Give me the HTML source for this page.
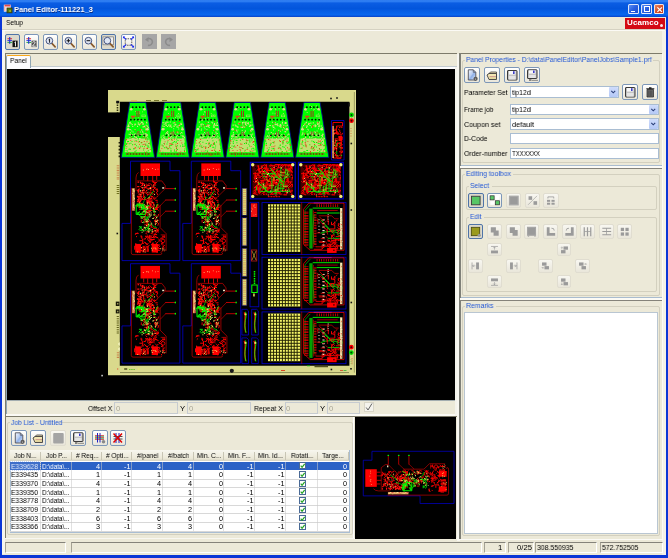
<!DOCTYPE html>
<html><head><meta charset="utf-8"><title>Panel Editor</title>
<style>
html,body{margin:0;padding:0;}
body{width:668px;height:558px;overflow:hidden;background:#ece9d8;font-family:"Liberation Sans",sans-serif;font-size:7.6px;color:#000;position:relative;}
.a{position:absolute;}
.t{position:absolute;white-space:nowrap;line-height:10px;will-change:transform;}
.bl{color:#2257d6;}
.btn{position:absolute;width:14px;height:14px;border:1px solid #7d97b8;border-radius:2px;background:linear-gradient(#ffffff,#e9e6da);}
.btn svg{position:absolute;left:0;top:0;}
.btn.dis{border-color:#e0ddd0;background:linear-gradient(#f8f7f1,#e9e6da);}
.btn.sel{background:#dcd9cc;border-color:#4f74a8;}
.grp{position:absolute;border:1px solid #d3d0bf;border-radius:2px;box-sizing:border-box;}
.inp{position:absolute;background:#fff;border:1px solid #a9bdd2;box-sizing:border-box;}
.inp.dis{background:#ece9d8;border-color:#c6cbd0;}
.cell{position:absolute;height:9px;line-height:9px;white-space:nowrap;overflow:hidden;font-size:7.4px;}
svg{display:block;}
</style></head><body>

<div class="a" style="left:0;top:0;width:668px;height:558px;background:#0a36d6;"></div>
<div class="a" style="left:0;top:0;width:668px;height:16.500px;background:linear-gradient(#2b79ee 0%,#3382f5 7%,#0b5de3 18%,#0355dc 50%,#0560e8 72%,#0866ee 86%,#0658e0 93%,#0a3fc4 100%);"></div>
<div class="a" style="left:2.100px;top:16.500px;width:663.600px;height:538.700px;background:#ece9d8;"></div>
<svg class="a" style="left:3px;top:4px" width="10" height="10" viewBox="0 0 10 10"><rect x="0.800" y="0.700" width="7" height="7" fill="#f6f2f2"/><rect x="1.500" y="0.700" width="6" height="1.800" fill="#e84a4a"/><rect x="1.200" y="2.500" width="1.200" height="4.500" fill="#f0a0a0"/><rect x="4" y="4" width="5" height="4.800" fill="#4e7a12" stroke="#3a3208" stroke-width="0.800"/><rect x="6.200" y="6.500" width="1.800" height="1" fill="#e8d820"/></svg>
<div class="t" style="top:5px;font-size:8.1px;transform:scaleX(0.928);transform-origin:left center;color:#fff;font-weight:bold;left:13.8px;text-shadow:0.5px 0.5px 0 #0a2a80;">Panel Editor-111221_3</div>
<div class="a" style="left:628.3px;top:3.5px;width:10.5px;height:10.5px;box-sizing:border-box;border:0.6px solid rgba(255,255,255,0.85);border-radius:1.5px;background:linear-gradient(135deg,#5a8ff4,#2a5fe0 50%,#1d4fd0);"><div class="a" style="left:2px;top:6.3px;width:3.5px;height:1.5px;background:#fff"></div></div>
<div class="a" style="left:641px;top:3.5px;width:10.5px;height:10.5px;box-sizing:border-box;border:0.6px solid rgba(255,255,255,0.85);border-radius:1.5px;background:linear-gradient(135deg,#5a8ff4,#2a5fe0 50%,#1d4fd0);"><div class="a" style="left:1.8px;top:1.8px;width:4.4px;height:3.6px;border:0.8px solid #fff;border-top-width:1.6px;"></div></div>
<div class="a" style="left:653.7px;top:3.5px;width:10.5px;height:10.5px;box-sizing:border-box;border:0.6px solid rgba(255,255,255,0.85);border-radius:1.5px;background:linear-gradient(135deg,#ee8a62,#d5502a 50%,#c23a14);"><svg width="9.300" height="9.300" viewBox="0 0 9.300 9.300"><path d="M2.400 2.400L6.900 6.900M6.900 2.400L2.400 6.900" stroke="#fff" stroke-width="1.300"/></svg></div>
<div class="t" style="top:18px;font-size:7.7px;transform:scaleX(0.850);transform-origin:left center;left:5.7px;">Setup</div>
<div class="a" style="left:625px;top:17.5px;width:40px;height:11px;background:#d40a12;"></div>
<div class="t" style="left:627px;top:17.5px;color:#fff;font-weight:bold;font-size:8px;letter-spacing:0.1px;">Ucamco</div>
<div class="a" style="left:659.5px;top:23.5px;width:3px;height:3px;border-radius:2px;background:#fff;opacity:.9"></div>
<div class="a" style="left:2px;top:29px;width:663px;height:1px;background:#d5d2c2;"></div>
<div class="a" style="left:2px;top:30px;width:663px;height:1px;background:#fbfaf5;"></div>
<div class="btn sel" style="left:5.2px;top:33.7px;width:13px;height:14px;"><svg width="13" height="14" viewBox="0 0 14 14"><path d="M1.5 3.5h5" stroke="#e02020" stroke-width="1"/><path d="M1.5 5.5h5" stroke="#2030e0" stroke-width="1"/><path d="M1.5 7.5h5" stroke="#20b040" stroke-width="1"/><path d="M4 1.5v7.5" stroke="#2030d0" stroke-width="1.2"/><rect x="7" y="5.5" width="5.5" height="7" fill="#111"/><path d="M9.2 7.5l1-0.8v5" stroke="#fff" stroke-width="1" fill="none"/></svg></div>
<div class="btn " style="left:24px;top:33.7px;width:13px;height:14px;"><svg width="13" height="14" viewBox="0 0 14 14"><path d="M1.5 3.5h5" stroke="#e02020" stroke-width="1"/><path d="M1.5 5.5h5" stroke="#2030e0" stroke-width="1"/><path d="M1.5 7.5h5" stroke="#20b040" stroke-width="1"/><path d="M4 1.5v7.5" stroke="#2030d0" stroke-width="1.2"/><rect x="7" y="5.5" width="5.5" height="7" fill="#555"/><path d="M8 7.5c1-1.5 3.5-1 2.6.8L8 11.5h3.6" stroke="#fff" stroke-width="0.9" fill="none"/></svg></div>
<div class="btn " style="left:42.8px;top:33.7px;width:13px;height:14px;"><svg width="13" height="14" viewBox="0 0 14 14"><path d="M8 8L12 12.2" stroke="#8a5a2a" stroke-width="1.8" stroke-linecap="round"/><circle cx="5.8" cy="5.6" r="3.6" fill="#dfe6f4" stroke="#3a4a78" stroke-width="1"/><path d="M5 4.6l1-.8v4" stroke="#111" stroke-width="1" fill="none"/></svg></div>
<div class="btn " style="left:62.2px;top:33.7px;width:13px;height:14px;"><svg width="13" height="14" viewBox="0 0 14 14"><path d="M8 8L12 12.2" stroke="#8a5a2a" stroke-width="1.8" stroke-linecap="round"/><circle cx="5.8" cy="5.6" r="3.6" fill="#dfe6f4" stroke="#3a4a78" stroke-width="1"/><path d="M3.8 5.6h4M5.8 3.6v4" stroke="#111" stroke-width="1.1"/></svg></div>
<div class="btn " style="left:81.8px;top:33.7px;width:13px;height:14px;"><svg width="13" height="14" viewBox="0 0 14 14"><path d="M8 8L12 12.2" stroke="#8a5a2a" stroke-width="1.8" stroke-linecap="round"/><circle cx="5.8" cy="5.6" r="3.6" fill="#dfe6f4" stroke="#3a4a78" stroke-width="1"/><path d="M3.8 5.6h4" stroke="#111" stroke-width="1.1"/></svg></div>
<div class="btn sel" style="left:101.3px;top:33.7px;width:13px;height:14px;"><svg width="13" height="14" viewBox="0 0 14 14"><rect x="1" y="1.5" width="11.5" height="8.5" fill="#f2f2f2" stroke="#777" stroke-width="0.8"/><path d="M8 8L12 12.2" stroke="#8a5a2a" stroke-width="1.8" stroke-linecap="round"/><circle cx="5.8" cy="5.6" r="3.6" fill="#dfe6f4" stroke="#3a4a78" stroke-width="1"/></svg></div>
<div class="btn " style="left:121.2px;top:33.7px;width:13px;height:14px;"><svg width="13" height="14" viewBox="0 0 14 14"><rect x="3.5" y="3.5" width="7" height="7" fill="none" stroke="#222" stroke-width="0.8" stroke-dasharray="1.5 1"/><path d="M1.5 1.5L4.5 4.5M12.5 1.5L9.5 4.5M1.5 12.5L4.5 9.5M12.5 12.5L9.5 9.5" stroke="#1828f0" stroke-width="1.1"/><path d="M1 1h2.5L1 3.5zM13 1h-2.5L13 3.5zM1 13h2.5L1 10.500zM13 13h-2.5L13 10.5z" fill="#1828f0"/></svg></div>
<div class="a" style="left:141.6px;top:34.2px;width:15px;height:15px;background:#a6a6a6;"><svg width="15" height="15" viewBox="0 0 15 15"><path d="M5 5.2A3.4 3.4 0 1 1 6 11.2" fill="none" stroke="#8c8c8c" stroke-width="1.6"/><path d="M3 5.8L6.5 3v5z" fill="#8c8c8c"/></svg></div>
<div class="a" style="left:161px;top:34.2px;width:15px;height:15px;background:#a6a6a6;"><svg width="15" height="15" viewBox="0 0 15 15"><path d="M10 5.2A3.4 3.4 0 1 0 9 11.2" fill="none" stroke="#8c8c8c" stroke-width="1.6"/><path d="M12 5.8L8.500 3v5z" fill="#8c8c8c"/></svg></div>
<div class="a" style="left:4.800px;top:52.500px;width:452px;height:1.200px;background:#7d7b6b;"></div>
<div class="a" style="left:459.500px;top:52.500px;width:202.500px;height:1.200px;background:#7d7b6b;"></div>
<div class="a" style="left:2px;top:31px;width:2.800px;height:523px;background:#f6f5ee;"></div>
<div class="a" style="left:4.800px;top:52.500px;width:1.500px;height:486px;background:#7d7b6b;"></div>
<div class="a" style="left:4.800px;top:538px;width:452.500px;height:1.200px;background:#f8f7f1;"></div>
<div class="a" style="left:6px;top:66px;width:451px;height:1px;background:#c3cbd0;"></div>
<div class="a" style="left:6px;top:67px;width:451px;height:2px;background:#fcfcfe;"></div>
<div class="a" style="left:6px;top:67px;width:1px;height:348px;background:#91a7b4;"></div>
<div class="a" style="left:6.4px;top:54.6px;width:24.4px;height:13px;background:#fcfcfe;border:1px solid #91a7b4;border-bottom:none;border-top:1.5px solid #f8a81c;border-radius:2px 2px 0 0;box-sizing:border-box;"></div>
<div class="t" style="top:56px;font-size:7.7px;transform:scaleX(0.858);transform-origin:left center;left:9.9px;">Panel</div>
<svg class="a" style="left:7px;top:69px;" width="448" height="331" viewBox="7 69 448 331"><rect x="7" y="69" width="449" height="331" fill="#000"/><defs><g id="bb"><path d="M8.8 0.3H48.3V9.8H58.2V99.7H0.3V62.5H8.800z" fill="none" stroke="#0000cc" stroke-width="0.8"/><path d="M9.600 27V92q0 1.700 1.700 1.700H38.500q1.700 0 1.700-1.700" fill="none" stroke="#d00000" stroke-width="0.7"/><path d="M38.400 44V66.700L44.400 72.700V90" fill="none" stroke="#d00000" stroke-width="0.7"/><path d="M14.300 30V17q0-4 2.500-5.500M15.300 20H40.100L43.500 24.500V27.700" fill="none" stroke="#d00000" stroke-width="0.7"/><rect x="18.8" y="2.5" width="19.5" height="12.6" fill="#ff0000"/><path d="M24.6 8.1h0.8v0.8h-0.8zM26.5 8.2h0.8v0.8h-0.8zM30.4 7.1h0.8v0.8h-0.8zM21.2 8.7h0.8v0.8h-0.8zM24.9 7.5h0.8v0.8h-0.8zM35.9 7.9h0.8v0.8h-0.8zM33.5 8.0h0.8v0.8h-0.8z" fill="#ffd080"/><path d="M22 15v4M26 15v5M31 15v5M35 15v4" stroke="#ff0000" stroke-width="0.8"/><rect x="10.5" y="27.300" width="2.5" height="22.500" fill="#e0a060"/><path d="M11.7 30.7h0.9v0.9h-0.9zM11.6 46.2h0.9v0.9h-0.9zM11.4 43.4h0.9v0.9h-0.9zM11.7 28.9h0.9v0.9h-0.9zM11.9 40.2h0.9v0.9h-0.9zM11.0 28.2h0.9v0.9h-0.9zM12.1 37.7h0.9v0.9h-0.9zM11.8 46.4h0.9v0.9h-0.9zM11.8 47.3h0.9v0.9h-0.9zM11.2 44.7h0.9v0.9h-0.9zM11.3 47.6h0.9v0.9h-0.9zM12.1 29.6h0.9v0.9h-0.9zM10.7 32.2h0.9v0.9h-0.9zM12.2 36.9h0.9v0.9h-0.9zM11.6 34.0h0.9v0.9h-0.9zM11.4 35.8h0.9v0.9h-0.9z" fill="#ffee90"/><path d="M11.1 40.1h0.9v0.9h-0.9zM11.6 46.9h0.9v0.9h-0.9zM11.7 47.5h0.9v0.9h-0.9zM12.0 48.8h0.9v0.9h-0.9zM11.7 31.0h0.9v0.9h-0.9zM12.0 48.2h0.9v0.9h-0.9zM12.1 39.7h0.9v0.9h-0.9zM11.8 32.0h0.9v0.9h-0.9z" fill="#e04040"/><path d="M43.5 27.7L53.3 27.7" stroke="#b80000" stroke-width="1.0"/><rect x="53" y="26.9" width="1.3" height="1.600" fill="#00ff00"/><path d="M43.5 39.1L53.3 39.1" stroke="#b80000" stroke-width="1.0"/><rect x="53" y="38.300000000000004" width="1.3" height="1.600" fill="#00ff00"/><path d="M43.5 50.3L53.3 50.3" stroke="#b80000" stroke-width="1.0"/><rect x="53" y="49.5" width="1.3" height="1.600" fill="#00ff00"/><path d="M43.500 27.700L34 37M44 39.100L35 48.500M44 50.300L38.500 56" stroke="#d00000" stroke-width="0.6" fill="none"/><rect x="40.500" y="26.300" width="2" height="1.500" fill="#f0e0c0"/><path d="M32.5 37.2L34.6 37.2M25.1 39.2L27.1 41.1M31.8 32.3L33.0 33.5M24.0 32.5L25.6 32.5M22.9 37.6L25.0 39.7M25.6 50.0L27.8 50.0M17.3 36.1L20.3 33.0M21.1 27.9L23.6 30.3M21.6 48.8L24.5 45.8M22.9 46.1L25.4 46.1M28.0 48.2L30.0 46.2M28.3 41.5L31.3 38.5M35.5 35.6L36.0 35.6M31.6 49.6L33.1 48.1M27.9 39.0L28.9 39.9M24.8 40.4L26.4 42.0M30.5 20.7L31.9 20.7M35.2 27.5L36.0 29.4M18.7 25.6L21.3 28.1M21.3 31.3L25.1 31.3M35.4 40.5L35.4 42.1M28.7 28.1L30.3 26.5M28.6 22.9L30.9 25.1M29.2 26.7L29.2 30.6M16.7 42.3L18.0 40.9M20.7 43.6L20.7 44.9M21.6 45.1L23.8 47.3M22.1 44.8L23.2 45.9M27.4 32.6L29.4 34.7M24.8 39.0L26.3 37.5M15.7 32.4L17.0 31.1M34.8 46.4L36.0 43.3M26.7 49.6L30.3 49.6M30.7 45.1L33.0 47.5M26.4 46.7L29.3 49.5M17.5 27.3L17.5 28.7M33.8 47.0L36.0 47.0M25.1 23.6L25.1 26.5M28.9 35.7L31.5 35.7M22.2 27.6L25.0 24.7M32.0 21.8L34.0 21.8M26.2 44.5L27.5 45.7M34.4 44.2L36.0 44.2M25.2 37.1L27.0 38.9M20.2 38.5L23.1 38.5M24.9 43.3L26.1 43.3M31.3 21.4L32.2 20.4M35.5 45.6L36.0 44.6M21.6 29.4L23.3 27.8M27.3 30.8L28.6 32.1M24.0 23.8L24.9 23.0M31.7 37.0L32.6 36.1M27.7 43.5L30.1 43.5M28.1 32.9L29.8 31.2M31.0 29.4L34.0 26.4M24.7 27.4L27.6 27.4M31.9 26.7L33.5 26.7M34.7 31.2L36.0 34.1M17.6 40.7L20.6 37.7M29.0 42.0L32.1 42.0M32.0 41.5L32.0 44.3M31.3 21.3L32.8 21.3M28.8 31.3L31.6 34.0M32.7 23.6L35.5 20.8M32.6 48.6L35.7 48.6M15.8 43.0L15.8 45.9M17.2 42.5L21.5 42.5M26.6 46.1L28.3 46.1M20.1 25.4L21.5 24.0M20.3 38.0L23.3 35.0M35.3 31.3L36.0 29.9M32.7 49.0L34.5 47.2M18.3 32.0L18.3 36.2M17.0 42.4L20.0 39.5M27.3 45.7L27.3 47.4M18.1 35.5L21.1 38.5M29.1 45.7L31.3 47.9M33.7 29.2L35.1 27.8M19.2 37.1L20.6 35.7M31.3 24.3L34.4 21.2M29.7 26.2L32.8 26.2M25.1 41.6L27.9 38.8M31.4 46.5L31.4 47.8M33.7 39.4L36.0 39.4M35.1 45.6L35.1 47.6M31.3 24.1L34.5 24.1M33.9 27.7L36.0 30.5M18.8 22.7L22.7 22.7M16.9 45.0L18.5 46.5M24.5 42.0L26.8 42.0M22.0 33.1L22.0 35.9M28.5 42.3L28.5 45.1M26.4 23.6L27.9 22.1M17.4 46.6L21.6 46.6M26.1 41.0L28.5 43.4M30.9 28.9L33.3 31.3M17.3 48.3L19.6 48.3M29.0 35.3L30.0 36.2M29.2 37.0L29.2 38.8M18.8 46.7L22.1 46.7M17.3 36.8L20.2 33.8M26.7 39.4L28.6 41.3M31.4 41.2L31.4 42.7M30.8 36.3L33.4 38.8M17.1 28.1L17.1 29.5M15.9 35.1L17.3 36.6M33.4 48.4L36.0 48.4M22.4 45.4L23.5 46.5M27.4 40.4L30.5 40.4M18.9 25.7L20.7 23.9" stroke="#ff0000" stroke-width="1.0" fill="none"/><path d="M27.2 39.7L27.2 41.9M27.9 41.0L27.9 43.0M23.5 26.1L24.6 27.1M15.5 41.1L17.4 39.1M19.7 43.7L20.9 42.5M29.7 38.2L30.0 37.0M15.5 25.8L17.7 25.8M26.6 37.5L27.9 36.2M18.0 40.6L19.0 39.6M16.7 28.1L16.7 30.4M17.0 40.8L19.3 40.8M15.4 36.5L16.8 35.1M23.1 44.2L24.2 45.4M25.4 24.4L28.1 24.4M25.7 39.5L25.7 41.2M29.0 42.5L29.0 44.4M22.3 23.7L23.4 23.7M27.7 38.6L28.9 37.4M25.5 34.4L26.8 33.1M19.6 32.6L21.3 30.9M21.6 32.4L22.3 33.1M20.5 30.3L21.9 28.8M18.4 21.1L19.4 22.1M17.2 32.5L17.2 33.9M15.3 35.6L17.3 35.6M17.1 36.2L17.1 38.1M15.9 21.6L17.2 21.0M15.5 38.8L17.0 38.8M20.9 21.7L20.9 24.6M18.6 30.7L19.6 31.7M24.3 29.7L25.6 29.7M27.1 28.3L29.2 26.2M26.8 45.0L28.2 46.0M15.5 29.4L17.5 31.5M16.4 38.1L19.3 38.1M16.6 38.0L17.6 38.0M22.2 25.7L23.6 27.1M18.0 45.3L19.4 44.0M28.8 44.5L29.5 45.3M26.3 36.8L27.5 38.0" stroke="#ff1010" stroke-width="1.3" fill="none"/><path d="M20.7 55.6L22.7 57.6M27.7 65.8L29.5 64.0M33.7 59.5L36.7 62.5M33.0 56.3L34.9 54.4M23.9 67.0L25.9 65.0M36.0 45.2L37.0 45.2M33.5 46.6L36.9 46.6M23.4 60.8L27.2 60.8M34.6 68.4L36.4 70.3M36.9 44.0L37.0 44.0M23.8 52.7L23.8 55.4M21.8 45.4L21.8 47.1M28.7 44.3L28.7 46.3M21.4 59.7L23.2 61.6M32.8 59.0L32.8 60.8M29.4 45.2L33.3 45.2M34.2 46.8L37.0 49.9M18.7 57.0L20.7 57.0M29.8 65.3L32.7 68.2M25.1 62.5L27.7 65.1M33.7 60.6L33.7 64.5M19.3 44.2L21.5 44.2M23.8 49.4L26.4 52.0M25.5 62.2L25.5 65.4M22.0 67.5L22.0 68.9M25.6 46.4L25.6 48.3M32.0 49.8L33.3 48.4M35.6 59.0L35.6 61.6M35.1 70.6L37.0 68.6M26.4 60.5L27.7 60.5M20.7 46.7L23.2 49.2M27.1 45.7L27.1 48.5M31.9 51.7L33.7 53.6M26.4 49.5L26.4 53.3M19.1 52.4L21.6 52.4M21.1 57.6L23.8 60.4M36.5 71.4L37.0 72.0M35.9 56.1L37.0 53.1M27.5 59.2L29.2 60.8M22.7 57.0L25.6 59.9M32.0 70.0L34.9 70.0M19.6 58.9L19.6 61.8M36.0 44.1L37.0 44.0M24.1 71.0L26.5 71.0M26.8 50.7L28.3 52.2M33.7 60.9L36.4 58.2M23.2 50.9L25.9 48.2M31.5 53.5L32.8 53.5M29.5 62.9L29.5 67.1M36.1 64.8L37.0 62.0M27.2 67.3L29.3 69.4M17.3 45.3L20.1 45.3M34.9 69.4L36.9 67.5M24.4 61.7L26.6 61.7M30.7 71.8L32.8 69.7M32.5 56.4L34.0 57.9M26.1 70.9L27.2 72.0M19.8 45.1L19.8 47.9M33.6 70.1L36.8 70.1M23.3 60.7L23.3 62.3M22.6 63.9L26.8 63.9M25.7 46.1L26.6 45.2M34.9 70.9L34.9 72.0M23.2 53.7L25.6 51.3M23.3 51.6L26.4 54.6M23.3 55.0L23.3 57.1M25.3 55.6L28.3 52.7M21.6 49.6L23.1 49.6M31.9 67.5L35.1 67.5M35.8 71.3L37.0 68.8" stroke="#ff0000" stroke-width="0.9" fill="none"/><path d="M21.4 55.5L24.1 55.5M19.5 55.6L19.5 57.9M34.1 47.0L36.0 42.8M28.9 46.0L28.9 47.7M22.2 60.2L22.2 62.3M17.0 68.9L19.7 66.2M31.6 54.1L33.9 54.1M21.6 45.7L21.6 47.8M23.7 68.3L23.7 70.0M16.1 52.4L17.6 50.9M20.9 51.9L25.0 47.9M18.1 65.7L20.6 68.3M26.6 65.9L29.1 63.5M25.3 57.1L27.7 54.6M32.7 47.6L32.7 51.8M22.0 66.0L26.1 70.0M21.3 47.7L23.1 47.7M24.2 66.4L26.2 66.4M19.2 45.4L21.5 47.8M26.5 63.4L27.8 62.1M22.5 58.5L24.3 56.8M26.1 52.5L28.2 54.5M30.1 63.6L33.4 66.9M33.2 65.4L35.2 67.3M21.4 45.4L24.0 48.1M30.6 49.0L33.0 51.4M25.1 55.4L25.1 59.3M35.7 56.8L36.0 56.8M17.4 53.9L21.1 57.6M17.2 65.9L20.4 65.9M23.3 48.0L27.3 48.0M24.6 66.3L27.9 69.6M16.2 52.4L18.5 50.2M23.5 60.2L27.3 56.4M18.9 48.2L22.1 48.2M18.8 44.3L20.9 46.3M19.9 42.8L23.3 46.2M26.7 62.6L26.7 67.9M24.8 61.1L26.3 59.7M20.5 45.9L20.5 48.8M18.3 46.9L22.2 43.0M16.6 51.8L16.6 53.4M25.5 45.9L27.1 44.2M27.7 68.6L29.7 70.0M17.9 69.4L22.6 69.4" stroke="#00ff00" stroke-width="0.8" fill="none"/><path d="M20.1 68.1h1.0v1.0h-1.0zM31.7 50.3h1.0v1.0h-1.0zM33.4 50.4h1.0v1.0h-1.0zM34.5 60.2h1.0v1.0h-1.0zM20.6 61.1h1.0v1.0h-1.0zM30.0 68.2h1.0v1.0h-1.0zM22.8 50.3h1.0v1.0h-1.0zM30.0 70.7h1.0v1.0h-1.0zM19.9 56.6h1.0v1.0h-1.0zM34.3 56.3h1.0v1.0h-1.0zM23.1 66.5h1.0v1.0h-1.0zM22.1 66.3h1.0v1.0h-1.0zM33.0 69.4h1.0v1.0h-1.0zM25.7 51.0h1.0v1.0h-1.0zM26.8 70.7h1.0v1.0h-1.0zM22.9 58.3h1.0v1.0h-1.0zM24.8 58.8h1.0v1.0h-1.0zM28.9 51.7h1.0v1.0h-1.0zM27.8 50.1h1.0v1.0h-1.0zM33.6 58.7h1.0v1.0h-1.0zM31.3 56.8h1.0v1.0h-1.0zM26.6 63.1h1.0v1.0h-1.0zM33.6 60.1h1.0v1.0h-1.0zM27.4 67.3h1.0v1.0h-1.0zM22.1 43.3h1.0v1.0h-1.0zM26.8 69.7h1.0v1.0h-1.0zM27.5 67.0h1.0v1.0h-1.0zM24.4 64.2h1.0v1.0h-1.0zM24.6 47.9h1.0v1.0h-1.0zM34.0 61.8h1.0v1.0h-1.0zM31.4 47.6h1.0v1.0h-1.0zM25.2 47.2h1.0v1.0h-1.0zM23.8 51.1h1.0v1.0h-1.0zM19.9 70.9h1.0v1.0h-1.0zM31.4 46.6h1.0v1.0h-1.0zM24.2 45.5h1.0v1.0h-1.0zM21.9 55.5h1.0v1.0h-1.0zM22.6 65.9h1.0v1.0h-1.0zM25.2 47.4h1.0v1.0h-1.0zM30.6 57.0h1.0v1.0h-1.0zM29.2 53.6h1.0v1.0h-1.0zM22.0 49.7h1.0v1.0h-1.0zM25.4 42.5h1.0v1.0h-1.0zM28.1 54.6h1.0v1.0h-1.0zM19.3 45.6h1.0v1.0h-1.0zM27.8 53.4h1.0v1.0h-1.0zM27.4 52.5h1.0v1.0h-1.0zM27.5 55.5h1.0v1.0h-1.0zM25.9 59.8h1.0v1.0h-1.0zM31.9 43.7h1.0v1.0h-1.0zM26.1 67.7h1.0v1.0h-1.0zM21.5 50.3h1.0v1.0h-1.0zM24.9 44.7h1.0v1.0h-1.0zM24.1 60.1h1.0v1.0h-1.0zM21.6 69.5h1.0v1.0h-1.0zM25.4 41.3h1.0v1.0h-1.0zM24.9 60.3h1.0v1.0h-1.0zM29.6 62.5h1.0v1.0h-1.0zM35.6 59.0h1.0v1.0h-1.0zM28.9 61.7h1.0v1.0h-1.0zM23.9 50.4h1.0v1.0h-1.0zM26.0 69.6h1.0v1.0h-1.0zM30.1 69.6h1.0v1.0h-1.0zM26.2 57.9h1.0v1.0h-1.0zM32.0 53.5h1.0v1.0h-1.0zM25.3 45.8h1.0v1.0h-1.0zM24.0 46.1h1.0v1.0h-1.0zM33.2 62.8h1.0v1.0h-1.0zM24.5 45.2h1.0v1.0h-1.0zM34.6 55.5h1.0v1.0h-1.0z" fill="#f0e060"/><path d="M25.7 31.3h0.9v0.9h-0.9zM32.3 33.1h0.9v0.9h-0.9zM22.6 36.5h0.9v0.9h-0.9zM26.9 36.0h0.9v0.9h-0.9zM19.0 35.3h0.9v0.9h-0.9zM18.1 33.0h0.9v0.9h-0.9zM18.1 29.7h0.9v0.9h-0.9zM26.0 28.3h0.9v0.9h-0.9zM20.9 31.6h0.9v0.9h-0.9zM28.3 26.6h0.9v0.9h-0.9zM20.7 26.2h0.9v0.9h-0.9zM18.0 29.4h0.9v0.9h-0.9zM18.7 29.4h0.9v0.9h-0.9zM28.3 27.3h0.9v0.9h-0.9zM30.0 40.9h0.9v0.9h-0.9zM28.0 26.9h0.9v0.9h-0.9zM20.7 29.0h0.9v0.9h-0.9zM22.2 24.1h0.9v0.9h-0.9zM31.6 24.7h0.9v0.9h-0.9zM17.5 41.7h0.9v0.9h-0.9z" fill="#ffd860"/><path d="M14.500 44h7v3h2v6.500h-9z" fill="none" stroke="#00ff00" stroke-width="1"/><path d="M32.0 30.0L26.0 38.0" stroke="#00ff00" stroke-width="0.7"/><path d="M13.0 45.0L28.0 45.0" stroke="#00ff00" stroke-width="0.6"/><path d="M24.0 36.0L20.0 46.0" stroke="#00ff00" stroke-width="0.6"/><path d="M17.3 43.6L17.3 47.2M15.7 51.3L15.7 53.5M17.7 54.2L20.1 51.8M23.8 48.0L24.0 49.6M19.9 47.4L19.9 49.0M18.3 42.0L18.3 45.5M19.0 55.3L21.6 56.0M16.6 50.8L18.6 52.8M16.0 44.2L20.0 44.2M18.8 52.3L20.2 53.7M20.7 50.5L20.7 52.4M14.9 43.1L18.1 43.1" stroke="#00ff00" stroke-width="0.9" fill="none"/><path d="M13.2 73.7L15.9 72.0M34.2 83.1L36.7 80.6M20.9 86.0L22.0 87.1M33.5 80.3L34.5 81.4M28.5 78.6L33.0 78.6M14.3 76.2L15.4 75.2M41.1 86.4L43.0 84.1M26.6 88.0L26.6 90.5M17.7 79.8L20.4 79.8M29.4 83.9L31.7 83.9M25.2 83.8L26.7 82.2M30.1 77.3L32.7 74.7M32.9 86.7L35.0 84.6M32.1 88.0L33.5 86.6M28.0 74.0L28.0 78.3M26.2 74.5L26.2 79.0M19.8 82.5L22.2 82.5M28.0 81.6L29.6 80.0M13.6 72.5L17.0 72.5M34.3 89.4L38.5 89.4M23.3 77.9L26.1 75.2M22.0 78.1L23.9 78.1M25.2 85.0L25.2 86.8M20.1 75.2L20.1 77.8M31.9 73.7L35.4 73.7M27.9 79.2L30.9 79.2M25.7 86.2L27.9 84.0M26.0 78.9L29.0 81.9M22.2 86.8L23.8 85.2M35.4 76.1L36.7 77.4M35.3 91.1L35.3 92.0M34.6 84.0L38.1 84.0M31.3 76.8L33.4 76.8M32.6 90.3L34.6 88.3M39.5 83.3L41.3 81.5M37.6 79.3L40.3 76.5M23.9 86.5L23.9 88.8M17.1 89.6L20.9 89.6M32.3 86.6L33.5 85.3M27.3 79.6L29.5 77.5M31.4 81.5L31.4 83.2M40.5 75.9L43.0 75.9M42.4 74.8L43.0 74.8M16.7 83.9L19.7 86.9M29.5 74.6L29.5 77.3M17.7 85.8L20.1 83.4M22.5 80.9L25.5 83.9M29.5 83.8L31.3 82.0M19.4 74.4L19.4 76.5M39.6 76.9L41.1 78.4M19.9 90.0L21.6 91.8M36.2 88.7L37.7 87.2M13.0 84.9L13.0 88.8M41.0 87.1L43.0 87.1M36.7 78.9L38.4 80.5M42.1 90.1L43.0 90.1M26.6 77.0L28.8 74.9M21.0 77.8L21.0 82.1M26.5 76.1L29.1 76.1M16.2 90.0L18.1 91.9M36.8 87.6L39.1 87.6M31.2 74.4L32.7 75.9M23.3 75.4L25.8 75.4M36.4 84.1L37.6 85.3M29.7 72.4L31.7 72.0M42.9 75.4L42.9 76.9M24.1 89.1L24.1 91.4M38.4 79.5L40.2 81.3M35.0 90.7L36.7 88.9M29.1 72.2L30.3 73.4M18.6 91.6L18.6 92.0M18.3 87.9L20.5 87.9M23.9 72.1L25.4 73.6M39.3 91.6L40.5 90.4M18.0 84.8L20.1 86.9M35.3 87.9L38.5 84.8M39.3 83.0L41.0 83.0M33.0 76.0L34.8 76.0M32.9 72.6L34.4 72.0M14.1 82.2L14.1 86.5M22.8 80.9L25.9 84.0M36.0 86.0L36.0 87.5M34.1 84.9L35.1 83.8M16.8 88.9L18.8 87.0M33.1 74.7L35.7 77.3" stroke="#ff0000" stroke-width="1.0" fill="none"/><rect x="13.500" y="83" width="5.600" height="8.600" fill="#ff0000"/><rect x="30" y="83" width="6.300" height="8.600" fill="#ff0000"/><rect x="21" y="85" width="2" height="6" fill="#e00000"/><rect x="25" y="85" width="2" height="6" fill="#e00000"/><path d="M32.9 86.7h0.9v0.9h-0.9zM19.2 86.0h0.9v0.9h-0.9zM33.8 87.6h0.9v0.9h-0.9zM22.6 88.1h0.9v0.9h-0.9zM29.4 86.9h0.9v0.9h-0.9zM21.4 89.6h0.9v0.9h-0.9zM31.1 86.8h0.9v0.9h-0.9zM15.6 90.6h0.9v0.9h-0.9zM30.1 88.6h0.9v0.9h-0.9zM22.9 90.8h0.9v0.9h-0.9z" fill="#ffe060"/><path d="M40.2 86.9h0.9v0.9h-0.9zM38.5 87.4h0.9v0.9h-0.9zM41.0 87.5h0.9v0.9h-0.9zM42.7 88.6h0.9v0.9h-0.9zM40.3 88.6h0.9v0.9h-0.9zM41.0 88.5h0.9v0.9h-0.9z" fill="#d0c060"/><circle cx="41.3" cy="80" r="1.8" fill="none" stroke="#ff0000" stroke-width="0.8"/><path d="M41.300 74v4M41.300 82v8M39 74h4.500" stroke="#ff0000" stroke-width="0.6" fill="none"/></g><g id="gb"><rect x="0.3" y="0.3" width="84" height="51.8" fill="none" stroke="#0000cc" stroke-width="0.8"/><rect x="6.3" y="2" width="32.2" height="47.6" fill="#f4f468"/><path d="M8.90 2V49.6M11.85 2V49.6M14.80 2V49.6M17.75 2V49.6M20.70 2V49.6M23.65 2V49.6M26.60 2V49.6M29.55 2V49.6M32.50 2V49.6M35.45 2V49.6M6.3 4.70H38.5M6.3 7.70H38.5M6.3 10.70H38.5M6.3 13.70H38.5M6.3 16.70H38.5M6.3 19.70H38.5M6.3 22.70H38.5M6.3 25.70H38.5M6.3 28.70H38.5M6.3 31.70H38.5M6.3 34.70H38.5M6.3 37.70H38.5M6.3 40.70H38.5M6.3 43.70H38.5M6.3 46.70H38.5" stroke="#202000" stroke-width="0.95" fill="none"/><path d="M40.0 0.0L40.0 52.2" stroke="#d00000" stroke-width="0.6"/><path d="M47 0.900H82.300V48H48.500L41.800 42V7z" fill="none" stroke="#ff0000" stroke-width="0.7"/><path d="M52 0.700H70" stroke="#e020c0" stroke-width="0.5"/><path d="M48.500 2.300L43.300 8V41" fill="none" stroke="#00ff00" stroke-width="0.5"/><path d="M44.600 9.500V44.500" stroke="#ff0000" stroke-width="4.2" stroke-dasharray="0.7 0.9"/><rect x="47.600" y="6.300" width="3.3" height="40" fill="#00a000"/><path d="M51.700 8V45" stroke="#e00000" stroke-width="0.6"/><path d="M53.600 10V44" stroke="#ff0000" stroke-width="2.4" stroke-dasharray="0.7 0.9"/><path d="M52.400 12q-2.500 15 0 30" fill="none" stroke="#00ff00" stroke-width="0.5"/><path d="M55 3.300H77.500" stroke="#ff0000" stroke-width="2.6" stroke-dasharray="0.7 1.600"/><path d="M51.0 5.8L78.0 5.8" stroke="#00ff00" stroke-width="0.9"/><path d="M55.0 10.7L78.0 10.7" stroke="#00ff00" stroke-width="0.9"/><path d="M55.500 8.200H76M57 13.500H70l3 3h4M56 16v6M66 13.500v5" stroke="#ff0000" stroke-width="0.6" fill="none"/><path d="M61.800 17V44" stroke="#f4ecc8" stroke-width="2.2" stroke-dasharray="1.2 2.400"/><path d="M57.300 17V32" stroke="#e8d8b0" stroke-width="1.100" stroke-dasharray="1 2.200"/><path d="M66.500 12V20" stroke="#f0e0c0" stroke-width="1.100" stroke-dasharray="0.8 1.400"/><path d="M59 17.500l10 10.500h9M59 31q9-4 20 0.500M63 23l10 9M66 36h12" fill="none" stroke="#00ff00" stroke-width="0.8"/><circle cx="78" cy="31" r="2.500" fill="none" stroke="#00ff00" stroke-width="0.6"/><path d="M73.1 37.3L77.3 37.3M75.9 38.2L78.0 38.2M76.7 20.9L76.7 23.9M69.9 20.7L69.9 22.8M70.3 22.7L73.5 19.6M67.1 38.7L68.3 37.5M66.6 18.0L66.6 22.6M75.1 43.0L75.1 44.0M68.8 43.0L68.8 44.0M67.4 43.2L68.7 41.8M68.9 27.4L68.9 29.2M68.4 26.6L72.7 26.6M72.7 36.4L73.8 37.4M75.6 30.5L77.3 28.8M71.1 22.6L73.3 22.6M77.3 27.3L78.0 25.4M69.8 33.0L71.0 33.0M74.2 34.2L78.0 34.2M74.8 42.2L78.0 44.0M71.7 41.2L73.2 39.7M66.4 37.5L69.4 40.4M65.5 42.6L66.6 43.7M71.7 27.4L72.9 28.7M77.0 32.2L78.0 33.8M69.0 38.8L71.5 41.3M78.0 22.2L78.0 21.2M65.4 37.3L67.2 39.0M70.9 29.0L72.3 29.0M75.4 26.7L75.4 28.7M73.2 38.5L74.3 37.4M69.8 19.5L69.8 22.3M70.9 44.0L74.0 40.9M77.5 35.9L78.0 37.6M68.8 28.5L70.0 27.3M75.7 31.8L77.0 30.5M76.3 22.7L78.0 24.8M65.8 38.7L68.4 38.7M74.9 27.4L77.6 30.2M75.9 24.9L78.0 28.3M77.4 26.8L78.0 26.8M71.2 38.1L72.9 39.8M71.0 39.2L73.6 41.8M69.5 34.7L72.3 31.9M69.6 39.9L72.7 36.8M77.7 42.9L77.7 44.0M67.6 27.4L70.7 30.5M74.0 36.7L74.0 40.7M73.0 42.3L75.2 40.1M68.9 32.4L72.1 35.5M74.4 18.7L75.6 18.0M73.1 22.7L73.1 26.8M73.2 19.1L73.2 22.1M67.2 41.2L67.2 42.8M71.3 32.3L73.2 34.2M69.9 33.9L69.9 37.3" stroke="#ff0000" stroke-width="0.9" fill="none"/><path d="M62.9 25.2L64.8 27.1M64.4 40.0L66.0 42.7M65.6 30.5L66.0 32.3M61.0 24.2L63.5 26.7M64.0 26.6L66.0 29.6M60.1 18.7L62.1 16.7M65.5 43.0L66.0 44.0M64.0 33.8L66.0 35.8M61.2 32.5L62.6 31.1M59.7 43.3L62.0 41.0M65.7 25.4L65.7 30.3M61.6 21.8L65.0 18.3M57.8 14.6L61.1 18.0M60.4 22.6L63.6 22.6M62.3 42.8L64.6 42.8M63.6 38.8L64.7 39.9M57.7 28.2L58.8 27.1M57.9 18.6L61.4 22.1M60.4 43.8L63.7 43.8M55.2 17.8L56.9 19.5M61.7 35.9L62.9 37.1M59.0 36.4L62.5 36.4M55.0 30.6L58.9 30.6M64.8 30.4L65.9 29.3" stroke="#ff0000" stroke-width="0.7" fill="none"/><path d="M67.9 44.2L72.6 39.5M73.2 45.6L73.2 47.0M74.0 42.2L76.0 46.2M72.7 44.3L75.6 47.0M69.0 42.3L69.0 45.8M65.6 42.9L68.7 46.1M66.8 41.8L71.5 41.8M57.4 40.1L63.5 40.1M69.3 38.2L74.9 38.2M76.0 44.3L76.0 44.3M60.4 43.8L60.4 47.0M75.9 44.4L75.9 47.0M68.2 41.7L68.2 44.5M56.9 39.0L60.8 39.0" stroke="#ff0000" stroke-width="0.8" fill="none"/><rect x="78.300" y="5.700" width="2.400" height="41.5" fill="#e8d098"/><path d="M78.8 29.1h0.8v0.8h-0.8zM78.5 22.1h0.8v0.8h-0.8zM79.4 6.4h0.8v0.8h-0.8zM78.5 33.8h0.8v0.8h-0.8zM79.1 20.3h0.8v0.8h-0.8zM79.4 43.0h0.8v0.8h-0.8zM78.5 17.9h0.8v0.8h-0.8zM79.3 33.5h0.8v0.8h-0.8zM78.8 44.1h0.8v0.8h-0.8zM79.2 14.9h0.8v0.8h-0.8zM78.4 15.5h0.8v0.8h-0.8zM79.7 17.5h0.8v0.8h-0.8zM80.0 38.7h0.8v0.8h-0.8zM79.8 24.4h0.8v0.8h-0.8zM79.0 11.3h0.8v0.8h-0.8zM78.3 19.8h0.8v0.8h-0.8zM79.3 7.5h0.8v0.8h-0.8zM79.8 26.5h0.8v0.8h-0.8z" fill="#ffffd8"/><path d="M79.1 21.8h0.8v0.8h-0.8zM79.1 45.0h0.8v0.8h-0.8zM78.5 27.5h0.8v0.8h-0.8zM79.2 21.6h0.8v0.8h-0.8zM79.7 44.3h0.8v0.8h-0.8zM79.0 38.2h0.8v0.8h-0.8zM79.6 9.4h0.8v0.8h-0.8zM79.8 25.9h0.8v0.8h-0.8zM78.7 34.4h0.8v0.8h-0.8zM78.9 39.9h0.8v0.8h-0.8zM78.8 43.7h0.8v0.8h-0.8zM79.5 38.2h0.8v0.8h-0.8z" fill="#e04020"/><rect x="65.4" y="45.600" width="9.5" height="5" fill="#ff0000"/><path d="M52 47h8l3-3h14M54 44.500h9" stroke="#ff0000" stroke-width="0.8" fill="none"/><rect x="71.5" y="47.300" width="1.4" height="1.4" fill="#400000"/></g><g id="sq"><rect x="0.4" y="0.4" width="44.9" height="36.6" fill="none" stroke="#0000cc" stroke-width="1.100"/><rect x="2.500" y="2.500" width="40.500" height="31" fill="#ff0000" fill-opacity="0.280"/><path d="M21.3 13.9L23.4 13.9M16.4 16.6L19.3 19.6M24.9 21.3L26.1 20.1M9.7 31.4L13.7 27.3M9.2 9.8L11.2 9.8M33.6 14.2L38.4 14.2M39.3 8.8L41.1 7.0M38.1 26.1L42.1 22.1M14.1 27.2L16.5 27.2M37.7 4.2L40.0 2.5M8.5 9.7L13.3 9.7M41.1 2.6L41.1 7.6M38.4 8.7L39.9 8.7M8.3 30.5L10.9 27.9M24.2 8.5L24.2 10.4M28.2 5.3L28.2 9.5M40.1 24.4L41.3 25.6M24.9 21.0L26.4 22.5M32.1 20.0L33.3 18.9M40.6 9.7L42.5 9.7M32.1 28.3L35.9 28.3M37.3 5.9L41.1 9.7M20.8 14.8L26.8 14.8M18.0 21.0L19.5 21.0M11.4 16.0L14.4 16.0M15.1 11.2L19.0 11.2M4.0 26.3L7.6 22.7M16.7 26.2L20.7 26.2M19.8 9.5L23.9 5.5M23.1 31.7L23.1 33.0M29.4 7.7L33.1 11.4M4.2 31.2L7.8 33.0M40.4 32.6L42.5 32.6M4.9 16.2L8.5 19.8M27.2 32.0L27.2 33.0M22.0 11.0L26.1 15.1M30.5 4.5L33.0 2.5M26.2 27.0L29.4 30.1M33.5 29.3L37.2 29.3M39.5 10.9L41.5 10.9M9.4 26.6L9.4 32.0M9.9 16.4L12.8 13.6M6.3 19.2L9.2 22.2M24.1 31.2L25.3 30.1M24.5 18.5L28.4 18.5M37.7 20.0L42.5 20.0M31.6 24.5L33.0 23.1M20.9 17.5L25.3 17.5M29.8 3.4L31.6 2.5M12.1 27.6L15.5 24.3M37.6 3.6L41.8 3.6M29.8 14.9L29.8 16.7M4.3 25.5L6.2 25.5M17.0 16.8L20.9 16.8M30.8 4.8L32.1 6.1M3.3 31.6L6.2 28.7M42.0 27.9L42.5 29.3M29.5 16.3L29.5 18.4M7.3 4.1L9.1 4.1M17.7 25.1L17.7 28.7M17.6 21.9L19.4 23.7M33.2 23.3L34.3 24.4M40.3 3.2L41.7 2.5M5.3 10.2L5.3 15.5M28.2 23.3L30.3 23.3M34.6 32.3L38.1 28.7M39.8 29.2L42.5 29.2M4.2 15.9L6.5 18.3M22.4 13.1L26.1 9.4M20.0 4.9L22.0 2.9M27.1 19.8L27.1 23.3M16.0 4.3L17.4 5.6M24.5 8.3L24.5 13.0M40.3 5.1L42.5 2.5M11.3 19.0L14.4 19.0M29.5 15.4L31.2 17.1M33.2 26.9L35.8 24.2M31.3 11.2L35.2 11.2M11.8 32.5L14.8 32.5M8.9 7.5L10.2 6.1M28.6 14.6L28.6 20.1M23.1 13.4L23.1 19.2M15.7 14.2L15.7 16.6M25.5 2.8L30.1 2.8M14.0 18.4L17.4 15.0M38.9 25.5L38.9 28.2M23.4 17.1L23.4 23.1M16.1 25.3L19.1 25.3M24.5 30.8L24.5 32.4M24.2 31.5L27.7 28.0M8.3 8.9L11.1 6.2M11.6 8.7L14.8 5.5M3.4 19.4L4.6 20.6M22.6 4.4L26.2 2.5M38.0 15.8L38.0 20.6M25.0 30.5L30.8 30.5M38.2 10.4L40.0 8.6M41.3 8.2L42.5 10.9M29.5 32.2L31.8 32.2M31.3 20.4L35.4 24.5M14.2 6.5L17.0 6.5M6.0 27.6L7.8 25.7M41.1 3.8L41.1 6.1M37.9 24.2L40.9 21.1M36.4 26.6L36.4 32.2M35.8 3.5L35.8 9.5M14.3 17.2L16.6 17.2M23.2 17.7L25.1 19.6M27.2 31.5L30.3 31.5M42.4 25.0L42.5 21.9M15.3 28.5L17.7 28.5M10.8 24.5L12.7 26.3M11.9 7.9L15.0 11.0M17.6 22.0L17.6 24.9M24.8 3.4L24.8 8.2M6.5 8.9L8.4 7.1M17.1 19.5L21.8 19.5M6.7 15.0L6.7 18.4M5.3 20.0L8.0 17.3M17.4 22.7L21.3 26.6M31.6 18.2L31.6 21.6M41.5 12.0L42.5 14.5M20.2 32.3L23.6 32.3M5.2 13.4L5.2 18.2M19.3 13.6L21.5 11.4M23.1 24.8L24.9 24.8M34.6 22.2L38.0 22.2M15.2 4.9L15.2 7.6M41.5 31.7L41.5 33.0M27.0 9.9L31.7 9.9M26.4 2.7L29.9 2.7M18.0 10.9L18.0 16.7M41.4 4.8L42.5 7.5M8.7 25.2L8.7 30.7M15.1 11.2L18.4 14.5M41.7 17.9L42.5 17.9M26.3 21.9L30.0 21.9M6.2 25.5L9.9 29.2M5.9 17.1L5.9 21.2M42.2 17.4L42.5 15.1M40.1 20.1L41.2 21.2M20.3 20.3L24.1 24.1M33.2 7.7L34.3 8.8M23.2 16.0L25.9 18.7M15.8 7.9L19.0 11.1M30.5 12.2L33.0 14.8M39.8 11.1L41.1 12.5M14.9 4.3L17.2 2.5M5.7 15.1L8.2 12.6M20.9 3.8L23.3 3.8M25.7 4.9L29.2 8.4M3.4 29.6L6.8 26.1M32.0 7.3L33.9 7.3M7.8 28.6L9.3 30.2M13.3 8.6L13.3 13.2M22.5 18.9L24.8 21.2M21.4 14.8L22.8 16.1M42.0 24.7L42.5 24.7M26.9 14.1L30.5 14.1M26.7 27.2L29.0 29.4M8.3 12.7L11.9 16.3M24.6 21.6L26.6 21.6M17.3 16.7L17.3 19.8M29.8 19.1L34.2 19.1M27.7 10.3L27.7 14.4M17.5 11.4L17.5 13.9M19.0 28.2L19.0 29.8M34.8 3.0L39.4 3.0M27.8 14.8L30.1 17.1M26.2 17.1L28.6 19.5M7.2 17.9L8.7 19.4M3.3 31.0L4.7 32.4M28.6 2.5L28.6 7.6M23.6 28.3L27.7 32.3M10.9 23.1L10.9 27.6M36.5 8.3L41.5 8.3M31.7 3.1L37.0 3.1M32.3 28.1L34.3 30.1M24.5 15.8L24.5 21.7M29.6 18.1L31.5 18.1M11.5 3.6L11.5 8.9M31.4 22.7L35.5 22.7M34.0 19.3L35.9 21.1M8.7 3.7L8.7 8.4M33.2 23.8L33.2 29.5M10.0 20.2L12.4 22.6M30.7 6.5L34.9 2.5M24.1 12.2L27.4 8.8M26.4 9.3L28.9 11.9M20.5 16.9L22.2 15.2M9.3 5.9L9.3 9.1M16.2 21.5L16.2 26.0M5.6 13.7L9.7 17.8M7.7 10.9L10.1 8.6M11.6 22.0L15.3 25.7M16.9 8.6L22.4 8.6M16.1 29.7L20.1 25.8M41.9 15.1L42.5 15.1M32.4 8.1L35.8 4.7M13.1 31.8L16.6 28.3M12.3 10.7L16.2 6.8M5.0 15.6L7.1 13.5M7.4 20.9L11.3 24.9M16.6 3.1L16.6 6.7M19.3 4.0L21.5 2.5M17.1 19.4L20.5 16.1M16.5 31.6L16.5 33.0M12.3 31.8L16.5 27.7M26.5 4.4L26.5 7.8M40.8 13.7L42.5 16.0M37.7 6.0L39.6 4.0M26.4 11.9L26.4 16.0M18.3 17.9L20.4 20.0M24.5 8.0L26.3 8.0M35.8 12.8L38.2 12.8M34.0 9.2L35.4 10.7M29.8 20.0L32.7 22.9M39.4 7.6L39.4 9.7M38.3 3.1L38.3 8.9M22.8 25.7L25.9 22.6M11.8 4.4L15.5 2.5M5.1 26.5L8.6 23.0M11.9 13.6L14.7 13.6M3.1 11.8L7.5 11.8M40.9 5.6L42.5 5.6M33.6 32.9L37.0 33.0M21.0 32.3L24.8 28.5M12.7 18.2L16.8 18.2M24.4 24.5L26.2 24.5M27.5 5.8L32.2 5.8" stroke="#ff0000" stroke-width="1.0" fill="none"/><path d="M16.9 8.0L16.9 11.9M38.6 19.3L38.6 21.7M26.1 11.9L30.1 11.9M13.6 9.4L15.6 9.4M32.5 5.7L33.9 5.0M16.7 7.1L18.9 7.1M38.9 7.3L40.4 5.8M13.9 24.2L17.6 24.2M27.5 8.0L27.5 10.5M9.4 24.0L9.4 27.4M7.4 11.3L10.9 11.3M35.9 6.9L38.5 6.9M12.7 14.1L14.3 12.5M20.1 24.2L22.5 24.2M17.5 7.8L17.5 11.0M15.8 22.8L15.8 24.6M22.8 18.3L22.8 21.3M37.8 7.0L37.8 9.7M39.5 7.5L41.0 7.5M20.4 20.8L20.4 22.9M23.5 7.6L23.5 9.4M21.5 5.9L23.9 8.3M16.4 21.3L18.3 21.3M7.3 23.2L9.5 21.0M24.4 14.6L27.1 12.0M24.1 14.2L24.1 16.5M32.9 18.0L32.9 20.6M10.3 18.7L14.1 18.7M7.4 23.3L7.4 26.5M5.9 28.2L5.9 30.8M10.3 12.1L13.2 12.1M23.4 16.1L25.8 13.8M13.5 19.9L13.5 23.1M24.3 5.2L27.1 5.2M11.8 19.7L11.8 21.3M39.9 28.8L41.0 31.0M7.7 15.5L9.9 15.5M18.0 25.3L20.3 23.0M11.8 28.4L13.1 29.8M28.3 8.2L30.8 10.7M20.6 13.8L22.7 16.0M30.9 15.5L30.9 19.0M26.7 22.6L28.2 21.0M36.1 25.4L36.1 28.8M38.2 12.2L38.2 13.7M25.7 13.8L27.3 15.4M25.6 8.9L28.8 8.9M20.7 27.0L22.6 25.2M21.7 11.1L24.0 8.8M17.8 17.0L17.8 19.0M35.7 20.5L38.3 17.9M36.7 18.0L38.5 16.2M19.2 22.5L23.1 22.5M25.1 12.5L25.1 15.3M6.4 17.9L6.4 19.8M20.7 22.5L23.0 24.8M5.9 13.6L5.9 15.4M15.9 20.9L18.3 20.9M29.0 27.1L30.2 25.9M19.4 16.2L19.4 19.1M17.6 12.2L18.6 11.1M7.3 12.0L9.1 13.8M14.2 10.7L14.2 12.5M28.1 29.7L30.3 31.0M26.9 31.0L28.9 31.0M16.9 6.7L16.9 10.5M6.3 27.4L9.3 27.4M16.6 19.8L16.6 21.4M19.6 22.5L20.7 21.3M36.9 18.2L39.1 18.2" stroke="#f00000" stroke-width="1.3" fill="none"/><path d="M35.3 26.2h1.2v1.2h-1.2zM28.7 21.7h1.2v1.2h-1.2zM18.6 20.0h1.2v1.2h-1.2zM17.6 23.7h1.2v1.2h-1.2zM36.5 12.5h1.2v1.2h-1.2zM31.2 6.9h1.2v1.2h-1.2zM7.3 9.3h1.2v1.2h-1.2zM14.7 16.2h1.2v1.2h-1.2zM18.4 29.4h1.2v1.2h-1.2zM6.0 28.3h1.2v1.2h-1.2zM12.9 12.4h1.2v1.2h-1.2zM21.3 16.5h1.2v1.2h-1.2zM25.1 4.9h1.2v1.2h-1.2zM26.0 5.2h1.2v1.2h-1.2zM10.0 11.9h1.2v1.2h-1.2zM22.9 24.4h1.2v1.2h-1.2zM5.2 4.8h1.2v1.2h-1.2zM19.3 10.4h1.2v1.2h-1.2zM30.5 26.8h1.2v1.2h-1.2zM37.5 31.6h1.2v1.2h-1.2zM39.6 10.7h1.2v1.2h-1.2zM25.0 7.6h1.2v1.2h-1.2zM24.1 23.6h1.2v1.2h-1.2zM27.4 31.5h1.2v1.2h-1.2zM17.9 15.9h1.2v1.2h-1.2zM37.3 26.4h1.2v1.2h-1.2zM10.9 15.1h1.2v1.2h-1.2zM32.7 5.7h1.2v1.2h-1.2zM34.2 29.1h1.2v1.2h-1.2zM28.0 7.3h1.2v1.2h-1.2zM24.4 8.3h1.2v1.2h-1.2zM36.9 11.0h1.2v1.2h-1.2zM5.9 16.6h1.2v1.2h-1.2zM12.8 28.2h1.2v1.2h-1.2zM10.6 7.3h1.2v1.2h-1.2zM17.8 16.3h1.2v1.2h-1.2zM24.0 30.9h1.2v1.2h-1.2zM18.7 28.5h1.2v1.2h-1.2zM8.9 17.5h1.2v1.2h-1.2zM36.9 27.4h1.2v1.2h-1.2zM27.7 6.5h1.2v1.2h-1.2zM41.0 14.1h1.2v1.2h-1.2zM28.6 6.8h1.2v1.2h-1.2zM7.6 15.6h1.2v1.2h-1.2zM33.2 25.2h1.2v1.2h-1.2zM18.3 11.2h1.2v1.2h-1.2zM25.3 16.4h1.2v1.2h-1.2zM13.2 7.6h1.2v1.2h-1.2zM6.0 6.5h1.2v1.2h-1.2zM32.8 30.7h1.2v1.2h-1.2zM33.7 22.8h1.2v1.2h-1.2zM20.5 11.7h1.2v1.2h-1.2zM21.7 15.3h1.2v1.2h-1.2zM34.7 30.9h1.2v1.2h-1.2zM18.9 11.7h1.2v1.2h-1.2zM31.0 29.8h1.2v1.2h-1.2zM39.9 31.4h1.2v1.2h-1.2zM33.4 27.2h1.2v1.2h-1.2zM21.5 23.4h1.2v1.2h-1.2zM11.9 31.9h1.2v1.2h-1.2z" fill="#000"/><path d="M14 8l8 8v14M20 6l10 12-4 14M31 5v24M36 8l-3 20M8 20l10 10M12 12h14M10 29.500h30M25 14l8 6" fill="none" stroke="#00ff00" stroke-width="0.8"/><path d="M14.0 25.9L18.1 30.1M25.5 24.2L25.5 30.3M25.7 9.7L28.3 7.1M11.4 25.9L17.5 25.9M31.7 18.2L34.6 15.3M17.8 11.8L23.5 11.8M29.3 16.3L33.3 20.4M22.0 8.1L25.3 11.4M11.8 22.0L15.1 22.0M10.2 25.9L10.2 28.4M12.7 14.6L15.6 14.6M36.7 12.2L40.0 12.2M37.3 10.1L37.3 14.1M24.0 31.6L26.3 32.0M27.9 26.4L34.7 26.4M15.5 25.7L15.5 29.2M24.5 26.3L28.2 22.6M6.6 24.4L6.6 28.6M37.3 11.2L40.0 15.6M34.7 6.9L38.1 10.2M30.5 22.8L33.2 22.8M17.6 30.5L22.4 30.5M28.0 11.5L29.7 13.3M13.8 15.6L15.5 17.3M23.6 15.4L27.5 15.4M9.0 21.6L11.5 24.1M35.4 15.7L38.5 15.7M38.3 26.4L40.0 29.5M36.1 6.8L39.7 10.4M30.7 18.4L34.7 22.4" stroke="#00ff00" stroke-width="0.7" fill="none"/><path d="M34.8 16.8L38.0 13.6M29.4 14.3L31.7 16.6M8.5 19.9L8.5 23.3M18.9 23.8L24.1 23.8M32.8 24.0L38.0 24.0M33.2 24.7L38.0 24.7M23.7 28.0L28.9 28.0M28.3 13.2L34.1 13.2M13.6 23.1L16.6 26.0M21.6 13.8L23.5 15.6M13.7 22.9L13.7 26.7M24.0 15.0L24.0 19.0M36.8 13.2L38.0 10.2M16.1 16.8L19.4 20.1M30.1 10.5L35.5 10.5M28.2 24.6L28.2 27.6" stroke="#b0c020" stroke-width="0.8" fill="none"/><path d="M31.1 5.7h0.9v0.9h-0.9zM5.6 19.2h0.9v0.9h-0.9zM20.3 28.7h0.9v0.9h-0.9zM9.8 9.8h0.9v0.9h-0.9zM25.9 19.9h0.9v0.9h-0.9zM37.1 27.9h0.9v0.9h-0.9zM17.2 12.1h0.9v0.9h-0.9zM18.2 11.1h0.9v0.9h-0.9zM23.7 5.0h0.9v0.9h-0.9zM19.3 13.8h0.9v0.9h-0.9zM35.8 14.5h0.9v0.9h-0.9zM17.9 32.6h0.9v0.9h-0.9zM11.9 4.8h0.9v0.9h-0.9zM35.2 27.8h0.9v0.9h-0.9zM36.8 29.9h0.9v0.9h-0.9zM13.1 22.4h0.9v0.9h-0.9zM26.7 17.2h0.9v0.9h-0.9zM6.2 16.2h0.9v0.9h-0.9zM31.9 28.5h0.9v0.9h-0.9zM37.2 30.5h0.9v0.9h-0.9zM13.0 9.0h0.9v0.9h-0.9zM25.6 32.8h0.9v0.9h-0.9zM15.9 14.4h0.9v0.9h-0.9zM25.0 27.8h0.9v0.9h-0.9z" fill="#ffe070"/><circle cx="2.8" cy="2.8" r="1.700" fill="#f4f080"/><circle cx="42.8" cy="2.8" r="1.700" fill="#f4f080"/><circle cx="2.8" cy="34.5" r="1.700" fill="#f4f080"/><circle cx="42.8" cy="34.5" r="1.700" fill="#f4f080"/><path d="M33 5.500h6" stroke="#300" stroke-width="2" stroke-dasharray="0.7 0.7"/><path d="M18 34.800h12" stroke="#ff0000" stroke-width="1.200" stroke-dasharray="1 0.6"/></g></defs><g fill="none"><path fill-rule="evenodd" fill="#d9d98c" d="M108 90H356V375.200H108zM119.800 101.700V365.800H349.400V101.700z"/><rect x="107" y="112.400" width="13.5" height="24.6" fill="#000"/><path d="M120 372.600H349" stroke="#303010" stroke-width="0.5"/><path d="M354.400 92V372.600" stroke="#404018" stroke-width="0.500"/><path d="M355.300 90V375" stroke="#e0e098" stroke-width="1"/><path d="M108 374.200H356" stroke="#dede94" stroke-width="1.600"/><path d="M119.300 142v16" stroke="#202008" stroke-width="1.400" stroke-dasharray="1.600 1.800"/><path d="M118 165v15" stroke="#c06030" stroke-opacity="0.7" stroke-width="2.600" stroke-dasharray="0.800 0.900"/><path d="M118 185v10" stroke="#707020" stroke-width="2.600" stroke-dasharray="0.900 1.100"/><path d="M117.800 316v18" stroke="#60601c" stroke-width="2.200" stroke-dasharray="1 1.200"/><path d="M118 352v6" stroke="#c06030" stroke-opacity="0.700" stroke-width="2.400" stroke-dasharray="0.800 0.900"/><path d="M119.800 342l-2 2l2 2zM119.800 347l-2 2l2 2z" fill="#f4f4c0"/><rect x="115.800" y="301.600" width="3.700" height="4.400" fill="#181808"/><rect x="115.800" y="309.400" width="3.700" height="4" fill="#181808"/><rect x="117.300" y="303" width="1" height="1.500" fill="#d0d080"/><rect x="117.300" y="310.800" width="1" height="1.500" fill="#d0d080"/><path d="M117.500 102v11" stroke="#303010" stroke-width="1.6" stroke-dasharray="1.5 1"/><rect x="116.200" y="100.800" width="3" height="2.400" fill="#111"/><path d="M124.200 369h3M314.500 366.400h13.500" stroke="#50501c" stroke-width="1.500" /><rect x="117.200" y="368.500" width="1" height="1" fill="#e03020"/><path d="M146 100.500h5M154 100.500h5M162 100.500h5" stroke="#77772c" stroke-width="1"/><path d="M131 100.800h6" stroke="#e0b040" stroke-width="0.800"/><path d="M129 369.500h6" stroke="#60c020" stroke-width="0.900" stroke-dasharray="1.500 0.700"/><path d="M138 369h1.500" stroke="#f0f060" stroke-width="1"/><path d="M281 370.500h4" stroke="#e02000" stroke-width="0.8"/><path d="M307 365.800h3" stroke="#00c000" stroke-width="0.8"/><path d="M340 370.500h3" stroke="#d04020" stroke-width="0.800"/><path d="M343.500 370.500h3" stroke="#30b030" stroke-width="0.800"/><rect x="330.59999999999997" y="368.7" width="1.6" height="1.6" fill="#111"/><rect x="350.2" y="368.0" width="1.6" height="1.6" fill="#111"/><rect x="350.5" y="301.7" width="1.6" height="1.6" fill="#111"/><rect x="350.5" y="209.2" width="1.6" height="1.6" fill="#111"/><rect x="350.5" y="142.7" width="1.6" height="1.6" fill="#111"/><rect x="330.2" y="97.7" width="1.6" height="1.6" fill="#111"/><rect x="336.2" y="97.2" width="1.6" height="1.6" fill="#111"/><rect x="116.5" y="232.7" width="1.6" height="1.6" fill="#111"/><circle cx="231.800" cy="370.800" r="2.100" fill="#181818"/><rect x="101.300" y="374.800" width="1.6" height="1.6" fill="#c8c8c8"/><circle cx="351.500" cy="115" r="1.700" fill="#004000" stroke="#00e000" stroke-width="1.400"/><circle cx="351.500" cy="120.700" r="1.700" fill="#400000" stroke="#ff0000" stroke-width="1.400"/><circle cx="351.300" cy="347.200" r="1.700" fill="#400000" stroke="#ff0000" stroke-width="1.400"/><circle cx="351.300" cy="352.600" r="1.700" fill="#004000" stroke="#00e000" stroke-width="1.400"/><path d="M352 358v7" stroke="#d04020" stroke-width="0.800" stroke-dasharray="0.800 1"/><path d="M351 359v6" stroke="#30c030" stroke-width="0.600" stroke-dasharray="0.600 1.400"/><path d="M351 128v10" stroke="#d04020" stroke-width="0.6" stroke-dasharray="1 1.5"/><path d="M129.6 102.5H145.9L154.6 157.4H121.3z" fill="#00ff00" stroke="#000090" stroke-width="0.8"/><path d="M126.4 138.5H149.4L151.3 152.2H124.6z" fill="#dcdc80" fill-opacity="0.88"/><path d="M124.0 146.5h1.0v1.0h-1.0zM134.5 151.0h1.0v1.0h-1.0zM141.9 145.7h1.0v1.0h-1.0zM149.9 144.3h1.0v1.0h-1.0zM144.0 151.8h1.0v1.0h-1.0zM148.4 146.8h1.0v1.0h-1.0zM148.4 138.8h1.0v1.0h-1.0zM135.6 150.3h1.0v1.0h-1.0zM146.6 144.7h1.0v1.0h-1.0zM128.8 143.3h1.0v1.0h-1.0zM135.6 140.1h1.0v1.0h-1.0zM139.0 141.0h1.0v1.0h-1.0zM132.0 144.2h1.0v1.0h-1.0zM125.9 143.1h1.0v1.0h-1.0zM133.4 148.6h1.0v1.0h-1.0zM125.6 150.2h1.0v1.0h-1.0zM140.2 145.8h1.0v1.0h-1.0zM128.4 148.8h1.0v1.0h-1.0zM145.2 138.6h1.0v1.0h-1.0zM145.2 143.7h1.0v1.0h-1.0zM137.7 146.4h1.0v1.0h-1.0zM143.1 149.5h1.0v1.0h-1.0zM127.1 141.1h1.0v1.0h-1.0zM128.0 141.0h1.0v1.0h-1.0zM147.8 150.3h1.0v1.0h-1.0zM133.3 147.9h1.0v1.0h-1.0zM147.9 150.3h1.0v1.0h-1.0zM147.2 146.5h1.0v1.0h-1.0zM148.2 143.0h1.0v1.0h-1.0zM141.2 142.2h1.0v1.0h-1.0zM134.8 143.7h1.0v1.0h-1.0zM137.9 138.5h1.0v1.0h-1.0zM135.9 145.3h1.0v1.0h-1.0zM126.1 143.9h1.0v1.0h-1.0zM146.7 139.6h1.0v1.0h-1.0zM143.9 146.2h1.0v1.0h-1.0zM131.5 141.0h1.0v1.0h-1.0zM130.4 142.8h1.0v1.0h-1.0zM140.7 142.3h1.0v1.0h-1.0zM127.1 150.4h1.0v1.0h-1.0zM123.3 151.6h1.0v1.0h-1.0zM129.8 149.0h1.0v1.0h-1.0zM146.0 151.6h1.0v1.0h-1.0zM147.2 138.6h1.0v1.0h-1.0zM146.8 151.8h1.0v1.0h-1.0zM147.8 145.6h1.0v1.0h-1.0zM129.4 148.4h1.0v1.0h-1.0zM126.3 146.2h1.0v1.0h-1.0z" fill="#00ff00"/><path d="M146.5 148.0h0.9v0.9h-0.9zM145.8 151.9h0.9v0.9h-0.9zM145.6 138.6h0.9v0.9h-0.9zM143.5 148.1h0.9v0.9h-0.9zM148.9 142.8h0.9v0.9h-0.9zM125.9 139.4h0.9v0.9h-0.9zM136.3 141.2h0.9v0.9h-0.9zM147.2 148.2h0.9v0.9h-0.9zM133.8 144.2h0.9v0.9h-0.9zM139.2 148.1h0.9v0.9h-0.9zM146.5 141.3h0.9v0.9h-0.9zM134.4 140.7h0.9v0.9h-0.9zM124.9 144.8h0.9v0.9h-0.9zM139.0 143.9h0.9v0.9h-0.9zM134.3 147.8h0.9v0.9h-0.9zM145.3 138.6h0.9v0.9h-0.9zM126.0 138.9h0.9v0.9h-0.9zM125.7 148.2h0.9v0.9h-0.9zM146.3 154.6h0.9v0.9h-0.9zM139.1 153.2h0.9v0.9h-0.9zM135.2 147.3h0.9v0.9h-0.9zM136.0 154.1h0.9v0.9h-0.9zM135.9 153.9h0.9v0.9h-0.9zM143.8 141.0h0.9v0.9h-0.9zM144.4 143.8h0.9v0.9h-0.9zM127.2 142.7h0.9v0.9h-0.9zM145.2 145.2h0.9v0.9h-0.9zM141.7 153.7h0.9v0.9h-0.9zM145.3 152.3h0.9v0.9h-0.9zM130.3 139.9h0.9v0.9h-0.9zM138.3 141.5h0.9v0.9h-0.9zM146.8 147.7h0.9v0.9h-0.9zM141.3 142.1h0.9v0.9h-0.9zM134.5 152.3h0.9v0.9h-0.9zM142.7 144.0h0.9v0.9h-0.9zM139.7 147.2h0.9v0.9h-0.9zM149.9 149.2h0.9v0.9h-0.9zM128.5 152.2h0.9v0.9h-0.9z" fill="#f03010"/><path d="M133.8 133.5h1.0v1.0h-1.0zM142.9 135.7h1.0v1.0h-1.0zM128.8 133.9h1.0v1.0h-1.0zM145.0 136.1h1.0v1.0h-1.0zM133.4 137.7h1.0v1.0h-1.0zM145.7 134.6h1.0v1.0h-1.0zM129.5 137.1h1.0v1.0h-1.0zM135.2 133.5h1.0v1.0h-1.0zM136.7 138.1h1.0v1.0h-1.0zM137.9 135.5h1.0v1.0h-1.0zM133.8 133.9h1.0v1.0h-1.0zM135.4 135.8h1.0v1.0h-1.0zM130.3 133.7h1.0v1.0h-1.0zM144.3 134.5h1.0v1.0h-1.0zM128.6 133.7h1.0v1.0h-1.0zM145.9 133.6h1.0v1.0h-1.0zM131.7 137.9h1.0v1.0h-1.0zM139.7 137.9h1.0v1.0h-1.0zM134.1 135.9h1.0v1.0h-1.0zM141.4 134.0h1.0v1.0h-1.0zM138.9 138.0h1.0v1.0h-1.0zM132.7 138.4h1.0v1.0h-1.0zM132.2 133.9h1.0v1.0h-1.0zM139.9 134.0h1.0v1.0h-1.0zM146.4 134.8h1.0v1.0h-1.0zM130.0 134.6h1.0v1.0h-1.0zM146.2 135.6h1.0v1.0h-1.0zM146.9 134.3h1.0v1.0h-1.0zM145.6 134.1h1.0v1.0h-1.0zM142.9 133.8h1.0v1.0h-1.0z" fill="#d8d880"/><path d="M127.9 126.1h1.1v1.1h-1.1zM134.5 123.5h1.1v1.1h-1.1zM128.2 123.7h1.1v1.1h-1.1zM135.1 123.7h1.1v1.1h-1.1zM142.4 123.8h1.1v1.1h-1.1zM127.8 125.1h1.1v1.1h-1.1zM131.7 124.1h1.1v1.1h-1.1zM142.1 121.7h1.1v1.1h-1.1zM147.7 126.8h1.1v1.1h-1.1zM137.7 122.2h1.1v1.1h-1.1zM137.0 125.8h1.1v1.1h-1.1zM142.4 126.4h1.1v1.1h-1.1zM143.9 125.8h1.1v1.1h-1.1zM142.8 123.2h1.1v1.1h-1.1zM132.2 126.0h1.1v1.1h-1.1zM139.9 123.3h1.1v1.1h-1.1zM146.0 121.7h1.1v1.1h-1.1zM146.3 122.4h1.1v1.1h-1.1zM139.0 124.5h1.1v1.1h-1.1zM140.8 121.6h1.1v1.1h-1.1zM140.9 121.9h1.1v1.1h-1.1zM130.4 123.1h1.1v1.1h-1.1zM143.0 126.2h1.1v1.1h-1.1zM145.6 124.7h1.1v1.1h-1.1zM137.8 123.6h1.1v1.1h-1.1zM134.2 124.5h1.1v1.1h-1.1zM146.8 125.6h1.1v1.1h-1.1zM128.6 125.8h1.1v1.1h-1.1zM127.3 126.2h1.1v1.1h-1.1zM129.9 121.7h1.1v1.1h-1.1zM141.6 122.4h1.1v1.1h-1.1zM138.6 123.7h1.1v1.1h-1.1zM129.0 122.3h1.1v1.1h-1.1zM144.7 126.6h1.1v1.1h-1.1z" fill="#dcdc80"/><path d="M147.2 136.7h1.0v1.0h-1.0zM146.5 128.4h1.0v1.0h-1.0zM136.1 136.9h1.0v1.0h-1.0zM145.3 136.4h1.0v1.0h-1.0zM134.6 129.1h1.0v1.0h-1.0zM131.3 130.5h1.0v1.0h-1.0zM129.9 132.3h1.0v1.0h-1.0zM132.6 131.5h1.0v1.0h-1.0zM135.2 136.8h1.0v1.0h-1.0zM147.1 134.7h1.0v1.0h-1.0zM141.4 129.8h1.0v1.0h-1.0zM144.8 133.1h1.0v1.0h-1.0zM131.1 135.8h1.0v1.0h-1.0zM139.9 131.5h1.0v1.0h-1.0zM131.7 134.4h1.0v1.0h-1.0zM130.2 129.3h1.0v1.0h-1.0zM145.5 129.6h1.0v1.0h-1.0zM142.4 132.0h1.0v1.0h-1.0zM137.3 133.2h1.0v1.0h-1.0zM141.2 129.3h1.0v1.0h-1.0zM145.2 128.6h1.0v1.0h-1.0zM143.3 133.5h1.0v1.0h-1.0zM134.5 136.5h1.0v1.0h-1.0zM142.2 131.1h1.0v1.0h-1.0zM146.0 135.4h1.0v1.0h-1.0zM129.6 129.1h1.0v1.0h-1.0z" fill="#d0d878"/><path d="M137.8 131.1h0.9v0.9h-0.9zM142.6 136.9h0.9v0.9h-0.9zM145.1 126.5h0.9v0.9h-0.9zM140.1 129.1h0.9v0.9h-0.9zM140.4 123.8h0.9v0.9h-0.9zM135.0 129.7h0.9v0.9h-0.9zM145.1 136.4h0.9v0.9h-0.9zM146.2 130.8h0.9v0.9h-0.9zM130.7 136.9h0.9v0.9h-0.9zM140.1 128.8h0.9v0.9h-0.9z" fill="#f03010"/><path d="M139.1 111.5h0.9v0.9h-0.9zM141.1 119.6h0.9v0.9h-0.9zM139.2 113.2h0.9v0.9h-0.9zM142.4 106.8h0.9v0.9h-0.9zM138.3 107.4h0.9v0.9h-0.9zM134.5 120.0h0.9v0.9h-0.9zM136.4 112.8h0.9v0.9h-0.9zM135.3 110.9h0.9v0.9h-0.9zM142.0 111.4h0.9v0.9h-0.9zM137.9 116.7h0.9v0.9h-0.9zM138.5 120.0h0.9v0.9h-0.9zM139.2 111.4h0.9v0.9h-0.9z" fill="#c8e070"/><circle cx="132.7" cy="107.2" r="0.900" fill="#001000"/><circle cx="136.2" cy="107.2" r="0.900" fill="#001000"/><circle cx="139.7" cy="107.2" r="0.900" fill="#001000"/><circle cx="143.2" cy="107.2" r="0.900" fill="#001000"/><circle cx="130.9" cy="119.7" r="0.900" fill="#001000"/><circle cx="134.4" cy="119.7" r="0.900" fill="#001000"/><circle cx="137.9" cy="119.7" r="0.900" fill="#001000"/><circle cx="141.4" cy="119.7" r="0.900" fill="#001000"/><circle cx="144.9" cy="119.7" r="0.900" fill="#001000"/><circle cx="131.6" cy="135.3" r="0.900" fill="#001000"/><circle cx="135.8" cy="135.3" r="0.900" fill="#001000"/><circle cx="140.0" cy="135.3" r="0.900" fill="#001000"/><circle cx="144.2" cy="135.3" r="0.900" fill="#001000"/><circle cx="131.2" cy="109.3" r="1.300" fill="#e0d890"/><circle cx="144.4" cy="109.3" r="1.300" fill="#e0d890"/><circle cx="128.2" cy="129.2" r="1.300" fill="#e0d890"/><circle cx="147.5" cy="129.2" r="1.300" fill="#e0d890"/><rect x="136.4" y="110.800" width="1" height="6.200" fill="#a03818"/><rect x="138.4" y="110.800" width="1" height="6.200" fill="#a03818"/><rect x="130.9" y="115.700" width="4.200" height="1.600" fill="#e04020"/><rect x="131.9" y="117.300" width="1.500" height="1.500" fill="#e04020"/><rect x="141.9" y="115" width="3.500" height="1.800" fill="none" stroke="#c8d870" stroke-width="0.500"/><rect x="136.7" y="131.500" width="0.900" height="4" fill="#a05030"/><rect x="138.5" y="131.500" width="0.900" height="4" fill="#a05030"/><path d="M126.0 154H150.0" stroke="#b03010" stroke-width="1.600" stroke-dasharray="1.2 0.9"/><path d="M127.0 154H149.0" stroke="#202000" stroke-width="1.200" stroke-dasharray="0.700 2.300"/><path d="M164.4 102.5H180.8L189.4 157.4H156.2z" fill="#00ff00" stroke="#000090" stroke-width="0.8"/><path d="M161.2 138.5H184.3L186.1 152.2H159.4z" fill="#dcdc80" fill-opacity="0.88"/><path d="M175.6 145.9h1.0v1.0h-1.0zM186.2 152.0h1.0v1.0h-1.0zM182.2 144.2h1.0v1.0h-1.0zM174.0 149.6h1.0v1.0h-1.0zM175.5 142.3h1.0v1.0h-1.0zM162.4 151.7h1.0v1.0h-1.0zM173.8 140.9h1.0v1.0h-1.0zM163.9 147.2h1.0v1.0h-1.0zM182.0 145.7h1.0v1.0h-1.0zM167.4 148.4h1.0v1.0h-1.0zM162.9 145.5h1.0v1.0h-1.0zM177.5 140.1h1.0v1.0h-1.0zM170.5 150.0h1.0v1.0h-1.0zM175.6 151.1h1.0v1.0h-1.0zM165.6 147.2h1.0v1.0h-1.0zM171.0 139.2h1.0v1.0h-1.0zM176.9 145.2h1.0v1.0h-1.0zM173.8 150.8h1.0v1.0h-1.0zM163.5 143.0h1.0v1.0h-1.0zM172.4 143.7h1.0v1.0h-1.0zM185.0 144.8h1.0v1.0h-1.0zM175.8 141.3h1.0v1.0h-1.0zM170.4 148.2h1.0v1.0h-1.0zM166.2 147.3h1.0v1.0h-1.0zM176.2 139.3h1.0v1.0h-1.0zM176.0 147.7h1.0v1.0h-1.0zM163.8 138.8h1.0v1.0h-1.0zM160.3 139.4h1.0v1.0h-1.0zM169.3 146.7h1.0v1.0h-1.0zM169.1 138.7h1.0v1.0h-1.0zM172.7 142.0h1.0v1.0h-1.0zM167.2 141.6h1.0v1.0h-1.0zM171.1 144.7h1.0v1.0h-1.0zM167.3 148.2h1.0v1.0h-1.0zM171.5 142.7h1.0v1.0h-1.0zM175.5 151.6h1.0v1.0h-1.0zM182.7 145.8h1.0v1.0h-1.0zM176.9 148.9h1.0v1.0h-1.0zM174.1 141.3h1.0v1.0h-1.0zM169.7 145.1h1.0v1.0h-1.0zM184.0 144.6h1.0v1.0h-1.0zM166.5 143.5h1.0v1.0h-1.0zM161.5 144.6h1.0v1.0h-1.0zM170.5 151.1h1.0v1.0h-1.0zM180.0 145.4h1.0v1.0h-1.0zM184.0 142.7h1.0v1.0h-1.0zM184.2 148.5h1.0v1.0h-1.0zM183.9 150.0h1.0v1.0h-1.0z" fill="#00ff00"/><path d="M182.1 153.1h0.9v0.9h-0.9zM158.9 152.7h0.9v0.9h-0.9zM185.7 153.5h0.9v0.9h-0.9zM178.7 152.4h0.9v0.9h-0.9zM165.8 146.6h0.9v0.9h-0.9zM170.7 143.6h0.9v0.9h-0.9zM164.6 141.4h0.9v0.9h-0.9zM181.4 142.6h0.9v0.9h-0.9zM168.3 148.2h0.9v0.9h-0.9zM176.8 154.1h0.9v0.9h-0.9zM184.1 151.1h0.9v0.9h-0.9zM159.8 150.5h0.9v0.9h-0.9zM176.9 154.1h0.9v0.9h-0.9zM158.8 153.1h0.9v0.9h-0.9zM164.1 143.5h0.9v0.9h-0.9zM175.9 146.4h0.9v0.9h-0.9zM183.9 145.9h0.9v0.9h-0.9zM175.4 144.5h0.9v0.9h-0.9zM180.4 139.9h0.9v0.9h-0.9zM169.0 145.5h0.9v0.9h-0.9zM169.5 143.0h0.9v0.9h-0.9zM180.4 151.5h0.9v0.9h-0.9zM161.9 145.4h0.9v0.9h-0.9zM166.3 154.4h0.9v0.9h-0.9zM171.8 140.2h0.9v0.9h-0.9zM176.0 149.8h0.9v0.9h-0.9zM167.6 140.2h0.9v0.9h-0.9zM176.2 147.8h0.9v0.9h-0.9zM177.7 154.6h0.9v0.9h-0.9zM164.9 153.0h0.9v0.9h-0.9zM171.3 143.9h0.9v0.9h-0.9zM171.9 143.9h0.9v0.9h-0.9zM161.4 147.9h0.9v0.9h-0.9zM167.3 147.7h0.9v0.9h-0.9zM171.5 138.9h0.9v0.9h-0.9zM169.5 143.7h0.9v0.9h-0.9zM174.1 138.5h0.9v0.9h-0.9zM177.1 143.0h0.9v0.9h-0.9z" fill="#f03010"/><path d="M168.2 135.1h1.0v1.0h-1.0zM179.4 135.2h1.0v1.0h-1.0zM183.9 137.1h1.0v1.0h-1.0zM169.4 137.8h1.0v1.0h-1.0zM183.6 137.5h1.0v1.0h-1.0zM160.7 136.7h1.0v1.0h-1.0zM167.8 137.2h1.0v1.0h-1.0zM170.3 136.5h1.0v1.0h-1.0zM164.1 138.2h1.0v1.0h-1.0zM168.0 134.0h1.0v1.0h-1.0zM177.7 135.5h1.0v1.0h-1.0zM164.3 136.5h1.0v1.0h-1.0zM171.0 136.3h1.0v1.0h-1.0zM167.6 135.7h1.0v1.0h-1.0zM175.9 136.2h1.0v1.0h-1.0zM172.6 137.3h1.0v1.0h-1.0zM172.4 137.3h1.0v1.0h-1.0zM181.4 135.2h1.0v1.0h-1.0zM163.2 136.8h1.0v1.0h-1.0zM170.0 136.7h1.0v1.0h-1.0zM178.5 135.6h1.0v1.0h-1.0zM167.9 137.8h1.0v1.0h-1.0zM168.9 137.8h1.0v1.0h-1.0zM171.4 135.8h1.0v1.0h-1.0zM165.0 133.6h1.0v1.0h-1.0zM183.3 135.9h1.0v1.0h-1.0zM182.7 135.5h1.0v1.0h-1.0zM182.1 137.8h1.0v1.0h-1.0zM175.3 137.6h1.0v1.0h-1.0zM161.6 135.4h1.0v1.0h-1.0z" fill="#d8d880"/><path d="M180.4 122.8h1.1v1.1h-1.1zM174.9 124.3h1.1v1.1h-1.1zM165.5 124.8h1.1v1.1h-1.1zM166.9 126.0h1.1v1.1h-1.1zM169.9 125.4h1.1v1.1h-1.1zM177.6 126.7h1.1v1.1h-1.1zM179.5 123.9h1.1v1.1h-1.1zM163.6 123.7h1.1v1.1h-1.1zM162.3 125.4h1.1v1.1h-1.1zM164.6 122.2h1.1v1.1h-1.1zM181.0 123.8h1.1v1.1h-1.1zM165.3 122.8h1.1v1.1h-1.1zM166.3 121.6h1.1v1.1h-1.1zM170.4 124.4h1.1v1.1h-1.1zM174.5 123.8h1.1v1.1h-1.1zM175.5 124.2h1.1v1.1h-1.1zM162.5 122.1h1.1v1.1h-1.1zM172.7 122.4h1.1v1.1h-1.1zM173.8 125.7h1.1v1.1h-1.1zM165.8 125.0h1.1v1.1h-1.1zM169.8 121.5h1.1v1.1h-1.1zM176.4 126.3h1.1v1.1h-1.1zM181.6 126.8h1.1v1.1h-1.1zM177.6 125.2h1.1v1.1h-1.1zM168.3 125.1h1.1v1.1h-1.1zM169.5 126.1h1.1v1.1h-1.1zM165.4 123.5h1.1v1.1h-1.1zM163.6 126.0h1.1v1.1h-1.1zM171.1 126.6h1.1v1.1h-1.1zM167.5 121.7h1.1v1.1h-1.1zM174.3 122.1h1.1v1.1h-1.1zM168.4 124.3h1.1v1.1h-1.1zM179.1 124.8h1.1v1.1h-1.1zM173.4 125.6h1.1v1.1h-1.1z" fill="#dcdc80"/><path d="M177.3 134.9h1.0v1.0h-1.0zM178.2 128.5h1.0v1.0h-1.0zM167.1 131.1h1.0v1.0h-1.0zM177.1 131.6h1.0v1.0h-1.0zM171.4 132.5h1.0v1.0h-1.0zM166.5 133.1h1.0v1.0h-1.0zM166.1 132.0h1.0v1.0h-1.0zM163.3 136.8h1.0v1.0h-1.0zM180.9 131.9h1.0v1.0h-1.0zM180.0 133.3h1.0v1.0h-1.0zM169.9 133.9h1.0v1.0h-1.0zM181.7 132.4h1.0v1.0h-1.0zM182.0 135.7h1.0v1.0h-1.0zM167.2 133.0h1.0v1.0h-1.0zM173.1 130.7h1.0v1.0h-1.0zM175.3 134.9h1.0v1.0h-1.0zM173.4 132.2h1.0v1.0h-1.0zM172.7 134.5h1.0v1.0h-1.0zM174.9 134.1h1.0v1.0h-1.0zM173.2 128.3h1.0v1.0h-1.0zM177.6 132.5h1.0v1.0h-1.0zM162.9 134.7h1.0v1.0h-1.0zM167.4 131.8h1.0v1.0h-1.0zM163.9 128.6h1.0v1.0h-1.0zM175.7 136.4h1.0v1.0h-1.0zM170.3 133.3h1.0v1.0h-1.0z" fill="#d0d878"/><path d="M179.0 124.2h0.9v0.9h-0.9zM175.0 122.2h0.9v0.9h-0.9zM176.1 131.9h0.9v0.9h-0.9zM178.7 121.0h0.9v0.9h-0.9zM170.3 135.2h0.9v0.9h-0.9zM168.6 137.0h0.9v0.9h-0.9zM178.2 131.7h0.9v0.9h-0.9zM176.5 130.9h0.9v0.9h-0.9zM170.6 131.9h0.9v0.9h-0.9zM178.9 126.2h0.9v0.9h-0.9z" fill="#f03010"/><path d="M175.0 117.2h0.9v0.9h-0.9zM168.0 113.2h0.9v0.9h-0.9zM173.0 118.6h0.9v0.9h-0.9zM170.7 114.8h0.9v0.9h-0.9zM179.7 108.3h0.9v0.9h-0.9zM179.3 106.2h0.9v0.9h-0.9zM178.0 113.1h0.9v0.9h-0.9zM179.3 117.3h0.9v0.9h-0.9zM171.2 113.0h0.9v0.9h-0.9zM167.0 116.0h0.9v0.9h-0.9zM169.4 107.2h0.9v0.9h-0.9zM177.5 117.5h0.9v0.9h-0.9z" fill="#c8e070"/><circle cx="167.5" cy="107.2" r="0.900" fill="#001000"/><circle cx="171.0" cy="107.2" r="0.900" fill="#001000"/><circle cx="174.5" cy="107.2" r="0.900" fill="#001000"/><circle cx="178.0" cy="107.2" r="0.900" fill="#001000"/><circle cx="165.8" cy="119.7" r="0.900" fill="#001000"/><circle cx="169.2" cy="119.7" r="0.900" fill="#001000"/><circle cx="172.8" cy="119.7" r="0.900" fill="#001000"/><circle cx="176.2" cy="119.7" r="0.900" fill="#001000"/><circle cx="179.8" cy="119.7" r="0.900" fill="#001000"/><circle cx="166.4" cy="135.3" r="0.900" fill="#001000"/><circle cx="170.7" cy="135.3" r="0.900" fill="#001000"/><circle cx="174.8" cy="135.3" r="0.900" fill="#001000"/><circle cx="179.1" cy="135.3" r="0.900" fill="#001000"/><circle cx="166.0" cy="109.3" r="1.300" fill="#e0d890"/><circle cx="179.2" cy="109.3" r="1.300" fill="#e0d890"/><circle cx="163.0" cy="129.2" r="1.300" fill="#e0d890"/><circle cx="182.4" cy="129.2" r="1.300" fill="#e0d890"/><rect x="171.2" y="110.800" width="1" height="6.200" fill="#a03818"/><rect x="173.2" y="110.800" width="1" height="6.200" fill="#a03818"/><rect x="165.8" y="115.700" width="4.200" height="1.600" fill="#e04020"/><rect x="166.8" y="117.300" width="1.500" height="1.500" fill="#e04020"/><rect x="176.8" y="115" width="3.500" height="1.800" fill="none" stroke="#c8d870" stroke-width="0.500"/><rect x="171.6" y="131.500" width="0.900" height="4" fill="#a05030"/><rect x="173.3" y="131.500" width="0.900" height="4" fill="#a05030"/><path d="M160.8 154H184.8" stroke="#b03010" stroke-width="1.600" stroke-dasharray="1.2 0.9"/><path d="M161.8 154H183.8" stroke="#202000" stroke-width="1.200" stroke-dasharray="0.700 2.300"/><path d="M199.3 102.5H215.6L224.3 157.4H191.0z" fill="#00ff00" stroke="#000090" stroke-width="0.8"/><path d="M196.1 138.5H219.1L221.0 152.2H194.3z" fill="#dcdc80" fill-opacity="0.88"/><path d="M206.8 151.6h1.0v1.0h-1.0zM196.0 150.6h1.0v1.0h-1.0zM217.7 152.1h1.0v1.0h-1.0zM214.2 144.0h1.0v1.0h-1.0zM216.0 141.4h1.0v1.0h-1.0zM214.3 150.3h1.0v1.0h-1.0zM207.1 150.4h1.0v1.0h-1.0zM209.9 146.0h1.0v1.0h-1.0zM208.5 143.1h1.0v1.0h-1.0zM212.8 143.7h1.0v1.0h-1.0zM210.6 143.9h1.0v1.0h-1.0zM220.6 150.2h1.0v1.0h-1.0zM210.1 144.9h1.0v1.0h-1.0zM202.4 141.8h1.0v1.0h-1.0zM214.0 142.3h1.0v1.0h-1.0zM199.7 141.1h1.0v1.0h-1.0zM193.0 152.2h1.0v1.0h-1.0zM194.5 147.0h1.0v1.0h-1.0zM197.5 149.2h1.0v1.0h-1.0zM201.7 147.1h1.0v1.0h-1.0zM215.0 151.1h1.0v1.0h-1.0zM214.7 147.6h1.0v1.0h-1.0zM199.6 145.6h1.0v1.0h-1.0zM205.7 143.0h1.0v1.0h-1.0zM215.1 145.6h1.0v1.0h-1.0zM209.0 143.2h1.0v1.0h-1.0zM214.5 147.5h1.0v1.0h-1.0zM208.0 147.0h1.0v1.0h-1.0zM198.7 142.5h1.0v1.0h-1.0zM212.4 140.3h1.0v1.0h-1.0zM196.4 145.2h1.0v1.0h-1.0zM205.3 146.3h1.0v1.0h-1.0zM212.2 146.8h1.0v1.0h-1.0zM201.2 145.5h1.0v1.0h-1.0zM205.3 150.2h1.0v1.0h-1.0zM196.5 149.3h1.0v1.0h-1.0zM199.0 145.6h1.0v1.0h-1.0zM195.2 149.1h1.0v1.0h-1.0zM193.9 148.4h1.0v1.0h-1.0zM213.8 142.9h1.0v1.0h-1.0zM220.9 150.4h1.0v1.0h-1.0zM220.1 147.7h1.0v1.0h-1.0zM206.9 139.9h1.0v1.0h-1.0zM216.3 151.6h1.0v1.0h-1.0zM213.0 146.7h1.0v1.0h-1.0zM218.5 151.5h1.0v1.0h-1.0zM216.7 151.8h1.0v1.0h-1.0zM219.9 144.9h1.0v1.0h-1.0z" fill="#00ff00"/><path d="M211.4 150.1h0.9v0.9h-0.9zM200.2 139.1h0.9v0.9h-0.9zM211.4 154.8h0.9v0.9h-0.9zM213.4 142.7h0.9v0.9h-0.9zM205.0 153.2h0.9v0.9h-0.9zM219.9 154.6h0.9v0.9h-0.9zM210.7 153.7h0.9v0.9h-0.9zM219.3 143.7h0.9v0.9h-0.9zM210.1 153.4h0.9v0.9h-0.9zM211.6 144.9h0.9v0.9h-0.9zM214.2 149.5h0.9v0.9h-0.9zM195.0 151.0h0.9v0.9h-0.9zM203.4 146.3h0.9v0.9h-0.9zM201.3 150.7h0.9v0.9h-0.9zM207.9 147.0h0.9v0.9h-0.9zM209.0 145.5h0.9v0.9h-0.9zM195.8 142.7h0.9v0.9h-0.9zM197.7 147.9h0.9v0.9h-0.9zM194.8 149.6h0.9v0.9h-0.9zM208.7 142.2h0.9v0.9h-0.9zM207.5 152.7h0.9v0.9h-0.9zM199.9 143.7h0.9v0.9h-0.9zM200.9 146.7h0.9v0.9h-0.9zM209.6 155.0h0.9v0.9h-0.9zM205.2 148.1h0.9v0.9h-0.9zM205.3 147.0h0.9v0.9h-0.9zM193.9 148.7h0.9v0.9h-0.9zM196.0 139.9h0.9v0.9h-0.9zM217.5 152.2h0.9v0.9h-0.9zM206.9 152.2h0.9v0.9h-0.9zM208.2 143.6h0.9v0.9h-0.9zM218.5 139.6h0.9v0.9h-0.9zM219.2 150.1h0.9v0.9h-0.9zM199.1 141.9h0.9v0.9h-0.9zM203.6 150.7h0.9v0.9h-0.9zM208.1 143.6h0.9v0.9h-0.9zM212.2 150.2h0.9v0.9h-0.9zM213.0 143.6h0.9v0.9h-0.9z" fill="#f03010"/><path d="M201.7 134.6h1.0v1.0h-1.0zM199.8 137.2h1.0v1.0h-1.0zM207.2 137.9h1.0v1.0h-1.0zM217.2 135.4h1.0v1.0h-1.0zM212.2 136.3h1.0v1.0h-1.0zM208.5 137.5h1.0v1.0h-1.0zM200.2 136.5h1.0v1.0h-1.0zM214.4 134.7h1.0v1.0h-1.0zM216.4 137.3h1.0v1.0h-1.0zM219.0 137.5h1.0v1.0h-1.0zM212.2 135.4h1.0v1.0h-1.0zM202.1 136.7h1.0v1.0h-1.0zM199.9 136.6h1.0v1.0h-1.0zM213.1 137.7h1.0v1.0h-1.0zM201.2 137.2h1.0v1.0h-1.0zM216.5 137.4h1.0v1.0h-1.0zM203.6 136.0h1.0v1.0h-1.0zM210.4 137.0h1.0v1.0h-1.0zM213.1 136.1h1.0v1.0h-1.0zM209.9 138.0h1.0v1.0h-1.0zM212.4 134.7h1.0v1.0h-1.0zM201.0 133.8h1.0v1.0h-1.0zM214.0 134.1h1.0v1.0h-1.0zM210.9 136.6h1.0v1.0h-1.0zM209.2 133.9h1.0v1.0h-1.0zM202.7 133.5h1.0v1.0h-1.0zM214.7 138.0h1.0v1.0h-1.0zM213.9 134.3h1.0v1.0h-1.0zM198.5 134.3h1.0v1.0h-1.0zM199.5 137.2h1.0v1.0h-1.0z" fill="#d8d880"/><path d="M208.6 126.8h1.1v1.1h-1.1zM206.9 124.6h1.1v1.1h-1.1zM216.6 124.9h1.1v1.1h-1.1zM211.3 121.7h1.1v1.1h-1.1zM205.7 125.9h1.1v1.1h-1.1zM213.6 124.3h1.1v1.1h-1.1zM208.1 124.7h1.1v1.1h-1.1zM217.0 124.9h1.1v1.1h-1.1zM206.6 125.4h1.1v1.1h-1.1zM207.8 121.8h1.1v1.1h-1.1zM207.7 125.8h1.1v1.1h-1.1zM198.8 126.3h1.1v1.1h-1.1zM216.2 123.4h1.1v1.1h-1.1zM212.0 122.4h1.1v1.1h-1.1zM211.4 121.7h1.1v1.1h-1.1zM207.9 124.9h1.1v1.1h-1.1zM213.8 126.6h1.1v1.1h-1.1zM200.4 124.2h1.1v1.1h-1.1zM215.3 124.8h1.1v1.1h-1.1zM200.5 123.8h1.1v1.1h-1.1zM201.6 123.4h1.1v1.1h-1.1zM213.2 125.2h1.1v1.1h-1.1zM213.2 126.4h1.1v1.1h-1.1zM214.0 124.5h1.1v1.1h-1.1zM213.9 123.8h1.1v1.1h-1.1zM214.0 122.9h1.1v1.1h-1.1zM212.9 126.6h1.1v1.1h-1.1zM202.8 124.2h1.1v1.1h-1.1zM216.8 122.2h1.1v1.1h-1.1zM207.4 124.6h1.1v1.1h-1.1zM198.8 121.6h1.1v1.1h-1.1zM200.6 125.6h1.1v1.1h-1.1zM209.1 124.7h1.1v1.1h-1.1zM203.8 126.5h1.1v1.1h-1.1z" fill="#dcdc80"/><path d="M215.4 131.6h1.0v1.0h-1.0zM207.3 136.8h1.0v1.0h-1.0zM205.6 135.3h1.0v1.0h-1.0zM202.5 135.4h1.0v1.0h-1.0zM206.4 129.1h1.0v1.0h-1.0zM198.1 128.5h1.0v1.0h-1.0zM213.4 129.9h1.0v1.0h-1.0zM202.7 134.3h1.0v1.0h-1.0zM207.8 136.6h1.0v1.0h-1.0zM202.9 136.6h1.0v1.0h-1.0zM206.6 132.2h1.0v1.0h-1.0zM201.1 128.5h1.0v1.0h-1.0zM213.9 136.5h1.0v1.0h-1.0zM215.6 132.5h1.0v1.0h-1.0zM205.2 133.6h1.0v1.0h-1.0zM214.3 135.4h1.0v1.0h-1.0zM207.8 136.3h1.0v1.0h-1.0zM200.8 129.8h1.0v1.0h-1.0zM217.5 136.2h1.0v1.0h-1.0zM207.8 132.6h1.0v1.0h-1.0zM204.1 132.0h1.0v1.0h-1.0zM215.8 133.5h1.0v1.0h-1.0zM211.9 132.6h1.0v1.0h-1.0zM217.0 132.9h1.0v1.0h-1.0zM215.2 128.2h1.0v1.0h-1.0zM204.5 128.2h1.0v1.0h-1.0z" fill="#d0d878"/><path d="M214.7 121.1h0.9v0.9h-0.9zM210.5 124.7h0.9v0.9h-0.9zM214.1 130.3h0.9v0.9h-0.9zM214.5 135.1h0.9v0.9h-0.9zM201.6 126.3h0.9v0.9h-0.9zM204.0 125.1h0.9v0.9h-0.9zM206.5 124.4h0.9v0.9h-0.9zM204.2 130.0h0.9v0.9h-0.9zM205.8 122.1h0.9v0.9h-0.9zM207.4 124.7h0.9v0.9h-0.9z" fill="#f03010"/><path d="M207.7 116.5h0.9v0.9h-0.9zM203.2 113.8h0.9v0.9h-0.9zM207.8 119.0h0.9v0.9h-0.9zM212.8 115.2h0.9v0.9h-0.9zM201.2 120.0h0.9v0.9h-0.9zM210.8 112.9h0.9v0.9h-0.9zM204.9 118.3h0.9v0.9h-0.9zM202.4 108.9h0.9v0.9h-0.9zM204.5 111.8h0.9v0.9h-0.9zM204.3 108.6h0.9v0.9h-0.9zM204.3 110.9h0.9v0.9h-0.9zM202.1 119.5h0.9v0.9h-0.9z" fill="#c8e070"/><circle cx="202.3" cy="107.2" r="0.900" fill="#001000"/><circle cx="205.8" cy="107.2" r="0.900" fill="#001000"/><circle cx="209.3" cy="107.2" r="0.900" fill="#001000"/><circle cx="212.8" cy="107.2" r="0.900" fill="#001000"/><circle cx="200.6" cy="119.7" r="0.900" fill="#001000"/><circle cx="204.1" cy="119.7" r="0.900" fill="#001000"/><circle cx="207.6" cy="119.7" r="0.900" fill="#001000"/><circle cx="211.1" cy="119.7" r="0.900" fill="#001000"/><circle cx="214.6" cy="119.7" r="0.900" fill="#001000"/><circle cx="201.3" cy="135.3" r="0.900" fill="#001000"/><circle cx="205.5" cy="135.3" r="0.900" fill="#001000"/><circle cx="209.7" cy="135.3" r="0.900" fill="#001000"/><circle cx="213.9" cy="135.3" r="0.900" fill="#001000"/><circle cx="200.9" cy="109.3" r="1.300" fill="#e0d890"/><circle cx="214.1" cy="109.3" r="1.300" fill="#e0d890"/><circle cx="197.9" cy="129.2" r="1.300" fill="#e0d890"/><circle cx="217.2" cy="129.2" r="1.300" fill="#e0d890"/><rect x="206.1" y="110.800" width="1" height="6.200" fill="#a03818"/><rect x="208.1" y="110.800" width="1" height="6.200" fill="#a03818"/><rect x="200.6" y="115.700" width="4.200" height="1.600" fill="#e04020"/><rect x="201.6" y="117.300" width="1.500" height="1.500" fill="#e04020"/><rect x="211.6" y="115" width="3.500" height="1.800" fill="none" stroke="#c8d870" stroke-width="0.500"/><rect x="206.4" y="131.500" width="0.900" height="4" fill="#a05030"/><rect x="208.2" y="131.500" width="0.900" height="4" fill="#a05030"/><path d="M195.7 154H219.7" stroke="#b03010" stroke-width="1.600" stroke-dasharray="1.2 0.9"/><path d="M196.7 154H218.7" stroke="#202000" stroke-width="1.200" stroke-dasharray="0.700 2.300"/><path d="M234.2 102.5H250.5L259.2 157.4H225.9z" fill="#00ff00" stroke="#000090" stroke-width="0.8"/><path d="M230.9 138.5H254.0L255.8 152.2H229.1z" fill="#dcdc80" fill-opacity="0.88"/><path d="M249.4 141.8h1.0v1.0h-1.0zM250.3 151.1h1.0v1.0h-1.0zM249.4 141.1h1.0v1.0h-1.0zM255.5 149.0h1.0v1.0h-1.0zM230.4 138.6h1.0v1.0h-1.0zM231.7 138.8h1.0v1.0h-1.0zM249.1 145.5h1.0v1.0h-1.0zM235.5 139.8h1.0v1.0h-1.0zM230.2 139.2h1.0v1.0h-1.0zM252.3 147.8h1.0v1.0h-1.0zM230.0 147.0h1.0v1.0h-1.0zM246.0 142.7h1.0v1.0h-1.0zM253.2 147.7h1.0v1.0h-1.0zM231.5 148.0h1.0v1.0h-1.0zM245.8 142.4h1.0v1.0h-1.0zM253.4 150.2h1.0v1.0h-1.0zM251.1 148.6h1.0v1.0h-1.0zM248.3 143.7h1.0v1.0h-1.0zM228.2 150.1h1.0v1.0h-1.0zM232.7 141.5h1.0v1.0h-1.0zM245.4 152.2h1.0v1.0h-1.0zM228.9 148.7h1.0v1.0h-1.0zM246.3 140.2h1.0v1.0h-1.0zM252.5 152.2h1.0v1.0h-1.0zM254.0 140.9h1.0v1.0h-1.0zM244.0 143.0h1.0v1.0h-1.0zM248.6 139.7h1.0v1.0h-1.0zM252.9 143.9h1.0v1.0h-1.0zM233.8 145.3h1.0v1.0h-1.0zM242.4 147.9h1.0v1.0h-1.0zM236.5 140.1h1.0v1.0h-1.0zM239.8 151.6h1.0v1.0h-1.0zM228.5 151.5h1.0v1.0h-1.0zM233.1 146.3h1.0v1.0h-1.0zM236.4 142.2h1.0v1.0h-1.0zM251.5 138.8h1.0v1.0h-1.0zM232.8 140.8h1.0v1.0h-1.0zM254.5 144.9h1.0v1.0h-1.0zM249.5 139.5h1.0v1.0h-1.0zM231.5 145.5h1.0v1.0h-1.0zM232.8 142.9h1.0v1.0h-1.0zM239.9 139.8h1.0v1.0h-1.0zM244.7 149.7h1.0v1.0h-1.0zM233.6 139.3h1.0v1.0h-1.0zM251.4 140.3h1.0v1.0h-1.0zM246.9 147.5h1.0v1.0h-1.0zM246.0 143.1h1.0v1.0h-1.0zM253.6 148.7h1.0v1.0h-1.0z" fill="#00ff00"/><path d="M230.2 140.1h0.9v0.9h-0.9zM229.7 147.1h0.9v0.9h-0.9zM234.3 152.3h0.9v0.9h-0.9zM247.2 140.2h0.9v0.9h-0.9zM249.5 150.5h0.9v0.9h-0.9zM237.0 145.1h0.9v0.9h-0.9zM229.1 150.3h0.9v0.9h-0.9zM236.8 150.2h0.9v0.9h-0.9zM246.7 149.0h0.9v0.9h-0.9zM245.6 142.4h0.9v0.9h-0.9zM240.2 149.9h0.9v0.9h-0.9zM239.0 146.7h0.9v0.9h-0.9zM250.7 146.2h0.9v0.9h-0.9zM245.9 139.6h0.9v0.9h-0.9zM245.7 153.9h0.9v0.9h-0.9zM229.8 142.9h0.9v0.9h-0.9zM235.9 152.4h0.9v0.9h-0.9zM252.5 142.1h0.9v0.9h-0.9zM252.9 141.1h0.9v0.9h-0.9zM235.3 146.7h0.9v0.9h-0.9zM231.3 153.5h0.9v0.9h-0.9zM230.5 140.9h0.9v0.9h-0.9zM251.7 150.5h0.9v0.9h-0.9zM239.6 149.0h0.9v0.9h-0.9zM240.6 147.1h0.9v0.9h-0.9zM253.6 141.2h0.9v0.9h-0.9zM235.0 155.1h0.9v0.9h-0.9zM228.9 153.3h0.9v0.9h-0.9zM241.3 152.1h0.9v0.9h-0.9zM241.9 148.2h0.9v0.9h-0.9zM242.3 139.0h0.9v0.9h-0.9zM232.5 150.1h0.9v0.9h-0.9zM234.2 146.4h0.9v0.9h-0.9zM241.4 143.8h0.9v0.9h-0.9zM252.4 154.4h0.9v0.9h-0.9zM228.5 148.1h0.9v0.9h-0.9zM240.2 143.6h0.9v0.9h-0.9zM244.3 150.7h0.9v0.9h-0.9z" fill="#f03010"/><path d="M243.7 138.1h1.0v1.0h-1.0zM244.4 135.0h1.0v1.0h-1.0zM246.6 135.5h1.0v1.0h-1.0zM244.4 137.7h1.0v1.0h-1.0zM251.0 135.9h1.0v1.0h-1.0zM232.3 135.8h1.0v1.0h-1.0zM244.0 134.2h1.0v1.0h-1.0zM236.2 136.1h1.0v1.0h-1.0zM238.3 135.8h1.0v1.0h-1.0zM239.5 138.0h1.0v1.0h-1.0zM231.9 136.6h1.0v1.0h-1.0zM253.9 137.2h1.0v1.0h-1.0zM247.0 135.4h1.0v1.0h-1.0zM238.9 138.4h1.0v1.0h-1.0zM239.4 137.7h1.0v1.0h-1.0zM236.4 136.3h1.0v1.0h-1.0zM231.0 137.9h1.0v1.0h-1.0zM235.4 135.9h1.0v1.0h-1.0zM237.9 134.6h1.0v1.0h-1.0zM232.7 134.2h1.0v1.0h-1.0zM231.2 135.3h1.0v1.0h-1.0zM244.3 135.8h1.0v1.0h-1.0zM236.4 136.9h1.0v1.0h-1.0zM231.1 136.3h1.0v1.0h-1.0zM251.9 136.9h1.0v1.0h-1.0zM251.0 134.8h1.0v1.0h-1.0zM239.6 135.0h1.0v1.0h-1.0zM232.5 134.7h1.0v1.0h-1.0zM242.5 134.6h1.0v1.0h-1.0zM234.7 136.7h1.0v1.0h-1.0z" fill="#d8d880"/><path d="M245.2 124.2h1.1v1.1h-1.1zM232.6 124.6h1.1v1.1h-1.1zM244.9 123.6h1.1v1.1h-1.1zM237.5 126.6h1.1v1.1h-1.1zM246.1 124.7h1.1v1.1h-1.1zM238.2 123.4h1.1v1.1h-1.1zM241.9 126.9h1.1v1.1h-1.1zM236.8 126.3h1.1v1.1h-1.1zM243.3 121.8h1.1v1.1h-1.1zM234.2 121.5h1.1v1.1h-1.1zM235.2 125.4h1.1v1.1h-1.1zM246.6 122.8h1.1v1.1h-1.1zM249.6 124.4h1.1v1.1h-1.1zM249.9 125.3h1.1v1.1h-1.1zM247.5 122.5h1.1v1.1h-1.1zM250.2 121.7h1.1v1.1h-1.1zM250.2 125.2h1.1v1.1h-1.1zM234.7 124.5h1.1v1.1h-1.1zM248.0 122.2h1.1v1.1h-1.1zM237.9 122.8h1.1v1.1h-1.1zM240.6 126.6h1.1v1.1h-1.1zM244.2 126.4h1.1v1.1h-1.1zM244.7 122.3h1.1v1.1h-1.1zM247.9 123.5h1.1v1.1h-1.1zM243.6 126.9h1.1v1.1h-1.1zM242.5 125.6h1.1v1.1h-1.1zM245.5 121.6h1.1v1.1h-1.1zM248.9 125.8h1.1v1.1h-1.1zM236.0 125.4h1.1v1.1h-1.1zM251.6 124.4h1.1v1.1h-1.1zM237.1 126.7h1.1v1.1h-1.1zM239.3 121.7h1.1v1.1h-1.1zM242.1 123.3h1.1v1.1h-1.1zM241.9 121.9h1.1v1.1h-1.1z" fill="#dcdc80"/><path d="M232.9 132.1h1.0v1.0h-1.0zM232.6 135.6h1.0v1.0h-1.0zM238.7 133.8h1.0v1.0h-1.0zM250.5 131.1h1.0v1.0h-1.0zM241.7 130.1h1.0v1.0h-1.0zM235.9 129.5h1.0v1.0h-1.0zM233.3 134.0h1.0v1.0h-1.0zM243.8 134.8h1.0v1.0h-1.0zM244.3 135.7h1.0v1.0h-1.0zM242.5 131.9h1.0v1.0h-1.0zM243.9 132.3h1.0v1.0h-1.0zM250.1 130.1h1.0v1.0h-1.0zM236.8 131.6h1.0v1.0h-1.0zM249.6 134.2h1.0v1.0h-1.0zM236.2 130.4h1.0v1.0h-1.0zM249.6 133.9h1.0v1.0h-1.0zM244.7 131.3h1.0v1.0h-1.0zM233.4 136.2h1.0v1.0h-1.0zM251.4 134.2h1.0v1.0h-1.0zM247.7 136.3h1.0v1.0h-1.0zM235.9 133.9h1.0v1.0h-1.0zM237.5 129.4h1.0v1.0h-1.0zM236.2 135.3h1.0v1.0h-1.0zM252.2 133.6h1.0v1.0h-1.0zM232.9 133.5h1.0v1.0h-1.0zM244.9 130.3h1.0v1.0h-1.0z" fill="#d0d878"/><path d="M238.4 123.0h0.9v0.9h-0.9zM234.8 130.1h0.9v0.9h-0.9zM240.9 126.2h0.9v0.9h-0.9zM233.7 121.7h0.9v0.9h-0.9zM239.6 123.7h0.9v0.9h-0.9zM243.7 127.4h0.9v0.9h-0.9zM245.1 125.7h0.9v0.9h-0.9zM242.9 124.4h0.9v0.9h-0.9zM249.5 131.5h0.9v0.9h-0.9zM239.6 122.7h0.9v0.9h-0.9z" fill="#f03010"/><path d="M243.5 117.3h0.9v0.9h-0.9zM238.1 116.3h0.9v0.9h-0.9zM241.8 117.3h0.9v0.9h-0.9zM248.6 107.8h0.9v0.9h-0.9zM239.2 113.8h0.9v0.9h-0.9zM237.5 109.5h0.9v0.9h-0.9zM242.5 106.8h0.9v0.9h-0.9zM236.6 104.7h0.9v0.9h-0.9zM247.8 108.9h0.9v0.9h-0.9zM240.4 108.2h0.9v0.9h-0.9zM242.0 119.8h0.9v0.9h-0.9zM238.4 107.1h0.9v0.9h-0.9z" fill="#c8e070"/><circle cx="237.2" cy="107.2" r="0.900" fill="#001000"/><circle cx="240.7" cy="107.2" r="0.900" fill="#001000"/><circle cx="244.2" cy="107.2" r="0.900" fill="#001000"/><circle cx="247.7" cy="107.2" r="0.900" fill="#001000"/><circle cx="235.5" cy="119.7" r="0.900" fill="#001000"/><circle cx="239.0" cy="119.7" r="0.900" fill="#001000"/><circle cx="242.5" cy="119.7" r="0.900" fill="#001000"/><circle cx="246.0" cy="119.7" r="0.900" fill="#001000"/><circle cx="249.5" cy="119.7" r="0.900" fill="#001000"/><circle cx="236.2" cy="135.3" r="0.900" fill="#001000"/><circle cx="240.4" cy="135.3" r="0.900" fill="#001000"/><circle cx="244.6" cy="135.3" r="0.900" fill="#001000"/><circle cx="248.8" cy="135.3" r="0.900" fill="#001000"/><circle cx="235.7" cy="109.3" r="1.300" fill="#e0d890"/><circle cx="248.9" cy="109.3" r="1.300" fill="#e0d890"/><circle cx="232.7" cy="129.2" r="1.300" fill="#e0d890"/><circle cx="252.1" cy="129.2" r="1.300" fill="#e0d890"/><rect x="241.0" y="110.800" width="1" height="6.200" fill="#a03818"/><rect x="243.0" y="110.800" width="1" height="6.200" fill="#a03818"/><rect x="235.5" y="115.700" width="4.200" height="1.600" fill="#e04020"/><rect x="236.5" y="117.300" width="1.500" height="1.500" fill="#e04020"/><rect x="246.5" y="115" width="3.500" height="1.800" fill="none" stroke="#c8d870" stroke-width="0.500"/><rect x="241.3" y="131.500" width="0.900" height="4" fill="#a05030"/><rect x="243.1" y="131.500" width="0.900" height="4" fill="#a05030"/><path d="M230.6 154H254.6" stroke="#b03010" stroke-width="1.600" stroke-dasharray="1.2 0.9"/><path d="M231.6 154H253.6" stroke="#202000" stroke-width="1.200" stroke-dasharray="0.700 2.300"/><path d="M269.0 102.5H285.3L294.0 157.4H260.7z" fill="#00ff00" stroke="#000090" stroke-width="0.8"/><path d="M265.8 138.5H288.8L290.7 152.2H264.0z" fill="#dcdc80" fill-opacity="0.88"/><path d="M267.6 151.4h1.0v1.0h-1.0zM279.7 145.1h1.0v1.0h-1.0zM283.9 146.8h1.0v1.0h-1.0zM269.9 144.2h1.0v1.0h-1.0zM269.4 151.7h1.0v1.0h-1.0zM262.8 152.1h1.0v1.0h-1.0zM268.3 149.1h1.0v1.0h-1.0zM286.3 142.3h1.0v1.0h-1.0zM278.7 146.7h1.0v1.0h-1.0zM282.4 143.6h1.0v1.0h-1.0zM288.5 149.7h1.0v1.0h-1.0zM273.2 147.9h1.0v1.0h-1.0zM285.0 148.6h1.0v1.0h-1.0zM272.9 148.3h1.0v1.0h-1.0zM282.6 146.6h1.0v1.0h-1.0zM268.8 147.2h1.0v1.0h-1.0zM286.1 151.3h1.0v1.0h-1.0zM269.8 144.8h1.0v1.0h-1.0zM284.9 138.7h1.0v1.0h-1.0zM276.4 151.5h1.0v1.0h-1.0zM281.1 151.9h1.0v1.0h-1.0zM266.8 151.1h1.0v1.0h-1.0zM285.3 145.3h1.0v1.0h-1.0zM270.5 143.3h1.0v1.0h-1.0zM282.3 146.1h1.0v1.0h-1.0zM282.1 141.4h1.0v1.0h-1.0zM281.9 151.1h1.0v1.0h-1.0zM265.7 143.2h1.0v1.0h-1.0zM282.8 142.3h1.0v1.0h-1.0zM265.3 140.5h1.0v1.0h-1.0zM275.2 151.8h1.0v1.0h-1.0zM279.8 144.4h1.0v1.0h-1.0zM271.6 148.2h1.0v1.0h-1.0zM287.7 141.5h1.0v1.0h-1.0zM283.7 139.5h1.0v1.0h-1.0zM280.5 149.2h1.0v1.0h-1.0zM267.7 149.9h1.0v1.0h-1.0zM265.6 143.5h1.0v1.0h-1.0zM265.2 140.8h1.0v1.0h-1.0zM273.2 142.3h1.0v1.0h-1.0zM266.0 142.8h1.0v1.0h-1.0zM287.3 142.9h1.0v1.0h-1.0zM290.0 152.0h1.0v1.0h-1.0zM280.2 147.8h1.0v1.0h-1.0zM277.3 151.9h1.0v1.0h-1.0zM272.4 142.1h1.0v1.0h-1.0zM282.6 140.8h1.0v1.0h-1.0zM288.0 141.7h1.0v1.0h-1.0z" fill="#00ff00"/><path d="M287.1 147.3h0.9v0.9h-0.9zM286.5 139.4h0.9v0.9h-0.9zM288.7 148.5h0.9v0.9h-0.9zM268.0 139.0h0.9v0.9h-0.9zM279.6 147.8h0.9v0.9h-0.9zM274.5 145.4h0.9v0.9h-0.9zM286.5 141.1h0.9v0.9h-0.9zM280.1 141.0h0.9v0.9h-0.9zM264.9 139.3h0.9v0.9h-0.9zM286.4 150.6h0.9v0.9h-0.9zM265.8 145.1h0.9v0.9h-0.9zM272.0 153.4h0.9v0.9h-0.9zM277.6 152.1h0.9v0.9h-0.9zM290.4 147.9h0.9v0.9h-0.9zM290.0 145.2h0.9v0.9h-0.9zM289.6 144.1h0.9v0.9h-0.9zM291.1 151.5h0.9v0.9h-0.9zM279.1 140.2h0.9v0.9h-0.9zM273.5 142.4h0.9v0.9h-0.9zM285.7 153.7h0.9v0.9h-0.9zM269.7 139.6h0.9v0.9h-0.9zM273.7 149.8h0.9v0.9h-0.9zM281.3 151.5h0.9v0.9h-0.9zM273.7 141.2h0.9v0.9h-0.9zM271.5 146.3h0.9v0.9h-0.9zM272.2 154.2h0.9v0.9h-0.9zM277.9 147.8h0.9v0.9h-0.9zM270.5 142.7h0.9v0.9h-0.9zM271.0 150.1h0.9v0.9h-0.9zM268.9 152.7h0.9v0.9h-0.9zM273.4 146.3h0.9v0.9h-0.9zM282.8 140.1h0.9v0.9h-0.9zM282.3 142.5h0.9v0.9h-0.9zM266.7 147.7h0.9v0.9h-0.9zM274.2 148.4h0.9v0.9h-0.9zM270.0 153.8h0.9v0.9h-0.9zM267.0 151.0h0.9v0.9h-0.9zM279.6 140.9h0.9v0.9h-0.9z" fill="#f03010"/><path d="M268.1 136.6h1.0v1.0h-1.0zM267.2 135.9h1.0v1.0h-1.0zM283.1 138.2h1.0v1.0h-1.0zM288.2 133.6h1.0v1.0h-1.0zM270.5 138.4h1.0v1.0h-1.0zM278.4 137.3h1.0v1.0h-1.0zM278.4 135.4h1.0v1.0h-1.0zM283.1 137.9h1.0v1.0h-1.0zM278.9 135.3h1.0v1.0h-1.0zM273.8 135.2h1.0v1.0h-1.0zM287.1 134.6h1.0v1.0h-1.0zM281.7 137.0h1.0v1.0h-1.0zM274.8 134.0h1.0v1.0h-1.0zM270.1 136.0h1.0v1.0h-1.0zM272.0 137.5h1.0v1.0h-1.0zM287.5 136.9h1.0v1.0h-1.0zM287.8 137.9h1.0v1.0h-1.0zM277.5 135.4h1.0v1.0h-1.0zM276.1 138.0h1.0v1.0h-1.0zM265.7 136.5h1.0v1.0h-1.0zM272.5 133.7h1.0v1.0h-1.0zM280.1 135.1h1.0v1.0h-1.0zM288.4 134.0h1.0v1.0h-1.0zM279.5 138.5h1.0v1.0h-1.0zM283.6 133.9h1.0v1.0h-1.0zM284.5 136.6h1.0v1.0h-1.0zM264.8 138.4h1.0v1.0h-1.0zM285.5 136.1h1.0v1.0h-1.0zM267.1 135.2h1.0v1.0h-1.0zM278.6 136.1h1.0v1.0h-1.0z" fill="#d8d880"/><path d="M274.5 124.2h1.1v1.1h-1.1zM281.9 121.8h1.1v1.1h-1.1zM272.2 125.3h1.1v1.1h-1.1zM280.4 125.1h1.1v1.1h-1.1zM273.4 126.8h1.1v1.1h-1.1zM285.4 125.4h1.1v1.1h-1.1zM276.6 124.3h1.1v1.1h-1.1zM272.8 126.9h1.1v1.1h-1.1zM276.5 123.6h1.1v1.1h-1.1zM283.3 124.7h1.1v1.1h-1.1zM271.9 125.4h1.1v1.1h-1.1zM285.7 122.2h1.1v1.1h-1.1zM269.2 125.0h1.1v1.1h-1.1zM267.3 122.5h1.1v1.1h-1.1zM272.6 125.2h1.1v1.1h-1.1zM271.9 121.7h1.1v1.1h-1.1zM274.8 122.5h1.1v1.1h-1.1zM280.4 126.6h1.1v1.1h-1.1zM274.8 122.2h1.1v1.1h-1.1zM286.8 124.7h1.1v1.1h-1.1zM277.1 123.3h1.1v1.1h-1.1zM267.4 126.0h1.1v1.1h-1.1zM285.4 123.0h1.1v1.1h-1.1zM279.3 125.8h1.1v1.1h-1.1zM269.8 125.0h1.1v1.1h-1.1zM283.0 126.8h1.1v1.1h-1.1zM284.6 122.8h1.1v1.1h-1.1zM275.3 123.9h1.1v1.1h-1.1zM281.8 123.2h1.1v1.1h-1.1zM272.9 126.8h1.1v1.1h-1.1zM279.5 124.6h1.1v1.1h-1.1zM277.4 125.1h1.1v1.1h-1.1zM284.8 121.9h1.1v1.1h-1.1zM280.1 123.9h1.1v1.1h-1.1z" fill="#dcdc80"/><path d="M281.9 129.4h1.0v1.0h-1.0zM274.2 136.1h1.0v1.0h-1.0zM272.6 133.2h1.0v1.0h-1.0zM269.2 134.7h1.0v1.0h-1.0zM268.2 132.4h1.0v1.0h-1.0zM281.3 133.9h1.0v1.0h-1.0zM278.2 129.7h1.0v1.0h-1.0zM283.9 128.2h1.0v1.0h-1.0zM270.9 131.9h1.0v1.0h-1.0zM284.3 131.2h1.0v1.0h-1.0zM285.0 131.1h1.0v1.0h-1.0zM284.3 136.3h1.0v1.0h-1.0zM277.2 134.6h1.0v1.0h-1.0zM277.4 132.8h1.0v1.0h-1.0zM274.4 128.2h1.0v1.0h-1.0zM280.7 136.2h1.0v1.0h-1.0zM280.0 130.8h1.0v1.0h-1.0zM269.3 136.5h1.0v1.0h-1.0zM278.3 130.0h1.0v1.0h-1.0zM270.7 131.9h1.0v1.0h-1.0zM283.5 136.5h1.0v1.0h-1.0zM274.9 133.1h1.0v1.0h-1.0zM273.0 129.4h1.0v1.0h-1.0zM278.1 135.4h1.0v1.0h-1.0zM285.4 136.8h1.0v1.0h-1.0zM285.2 131.4h1.0v1.0h-1.0z" fill="#d0d878"/><path d="M284.1 135.8h0.9v0.9h-0.9zM282.3 126.4h0.9v0.9h-0.9zM272.5 134.2h0.9v0.9h-0.9zM269.6 128.0h0.9v0.9h-0.9zM283.8 126.3h0.9v0.9h-0.9zM277.0 136.6h0.9v0.9h-0.9zM269.7 136.4h0.9v0.9h-0.9zM280.7 129.7h0.9v0.9h-0.9zM273.8 122.0h0.9v0.9h-0.9zM272.8 124.4h0.9v0.9h-0.9z" fill="#f03010"/><path d="M275.4 109.3h0.9v0.9h-0.9zM272.4 112.7h0.9v0.9h-0.9zM274.7 113.3h0.9v0.9h-0.9zM283.2 108.6h0.9v0.9h-0.9zM273.0 119.6h0.9v0.9h-0.9zM282.3 119.6h0.9v0.9h-0.9zM275.9 112.1h0.9v0.9h-0.9zM282.9 113.1h0.9v0.9h-0.9zM278.7 108.3h0.9v0.9h-0.9zM272.0 107.6h0.9v0.9h-0.9zM276.5 115.1h0.9v0.9h-0.9zM274.8 108.3h0.9v0.9h-0.9z" fill="#c8e070"/><circle cx="272.0" cy="107.2" r="0.900" fill="#001000"/><circle cx="275.5" cy="107.2" r="0.900" fill="#001000"/><circle cx="279.0" cy="107.2" r="0.900" fill="#001000"/><circle cx="282.5" cy="107.2" r="0.900" fill="#001000"/><circle cx="270.3" cy="119.7" r="0.900" fill="#001000"/><circle cx="273.8" cy="119.7" r="0.900" fill="#001000"/><circle cx="277.3" cy="119.7" r="0.900" fill="#001000"/><circle cx="280.8" cy="119.7" r="0.900" fill="#001000"/><circle cx="284.3" cy="119.7" r="0.900" fill="#001000"/><circle cx="271.0" cy="135.3" r="0.900" fill="#001000"/><circle cx="275.2" cy="135.3" r="0.900" fill="#001000"/><circle cx="279.4" cy="135.3" r="0.900" fill="#001000"/><circle cx="283.6" cy="135.3" r="0.900" fill="#001000"/><circle cx="270.6" cy="109.3" r="1.300" fill="#e0d890"/><circle cx="283.8" cy="109.3" r="1.300" fill="#e0d890"/><circle cx="267.6" cy="129.2" r="1.300" fill="#e0d890"/><circle cx="286.9" cy="129.2" r="1.300" fill="#e0d890"/><rect x="275.8" y="110.800" width="1" height="6.200" fill="#a03818"/><rect x="277.8" y="110.800" width="1" height="6.200" fill="#a03818"/><rect x="270.3" y="115.700" width="4.200" height="1.600" fill="#e04020"/><rect x="271.3" y="117.300" width="1.500" height="1.500" fill="#e04020"/><rect x="281.3" y="115" width="3.500" height="1.800" fill="none" stroke="#c8d870" stroke-width="0.500"/><rect x="276.1" y="131.500" width="0.900" height="4" fill="#a05030"/><rect x="277.9" y="131.500" width="0.900" height="4" fill="#a05030"/><path d="M265.4 154H289.4" stroke="#b03010" stroke-width="1.600" stroke-dasharray="1.2 0.9"/><path d="M266.4 154H288.4" stroke="#202000" stroke-width="1.200" stroke-dasharray="0.700 2.300"/><path d="M303.9 102.5H320.1L328.9 157.4H295.6z" fill="#00ff00" stroke="#000090" stroke-width="0.8"/><path d="M300.6 138.5H323.7L325.5 152.2H298.8z" fill="#dcdc80" fill-opacity="0.88"/><path d="M324.6 142.4h1.0v1.0h-1.0zM319.4 142.9h1.0v1.0h-1.0zM297.8 152.2h1.0v1.0h-1.0zM303.4 151.0h1.0v1.0h-1.0zM320.5 142.0h1.0v1.0h-1.0zM319.8 149.5h1.0v1.0h-1.0zM302.8 145.3h1.0v1.0h-1.0zM301.6 143.7h1.0v1.0h-1.0zM306.3 150.0h1.0v1.0h-1.0zM304.5 151.3h1.0v1.0h-1.0zM323.5 148.9h1.0v1.0h-1.0zM314.5 144.9h1.0v1.0h-1.0zM305.3 140.5h1.0v1.0h-1.0zM311.4 140.4h1.0v1.0h-1.0zM321.1 138.7h1.0v1.0h-1.0zM311.7 148.5h1.0v1.0h-1.0zM314.1 141.8h1.0v1.0h-1.0zM312.9 141.0h1.0v1.0h-1.0zM311.3 146.1h1.0v1.0h-1.0zM320.8 149.3h1.0v1.0h-1.0zM297.5 151.4h1.0v1.0h-1.0zM300.6 148.0h1.0v1.0h-1.0zM323.8 149.1h1.0v1.0h-1.0zM316.0 146.4h1.0v1.0h-1.0zM317.2 150.0h1.0v1.0h-1.0zM322.6 151.6h1.0v1.0h-1.0zM313.2 147.4h1.0v1.0h-1.0zM304.7 145.6h1.0v1.0h-1.0zM321.9 141.1h1.0v1.0h-1.0zM316.0 142.0h1.0v1.0h-1.0zM319.8 144.5h1.0v1.0h-1.0zM319.3 151.1h1.0v1.0h-1.0zM313.7 141.9h1.0v1.0h-1.0zM301.7 141.8h1.0v1.0h-1.0zM320.6 142.8h1.0v1.0h-1.0zM324.3 148.5h1.0v1.0h-1.0zM302.2 141.0h1.0v1.0h-1.0zM314.2 146.2h1.0v1.0h-1.0zM322.3 144.2h1.0v1.0h-1.0zM301.7 142.2h1.0v1.0h-1.0zM307.1 150.0h1.0v1.0h-1.0zM320.4 144.4h1.0v1.0h-1.0zM309.3 144.2h1.0v1.0h-1.0zM312.8 147.7h1.0v1.0h-1.0zM317.8 143.1h1.0v1.0h-1.0zM304.5 139.0h1.0v1.0h-1.0zM318.9 148.1h1.0v1.0h-1.0zM323.1 145.3h1.0v1.0h-1.0z" fill="#00ff00"/><path d="M314.7 153.4h0.9v0.9h-0.9zM313.8 148.9h0.9v0.9h-0.9zM304.8 142.0h0.9v0.9h-0.9zM320.0 144.3h0.9v0.9h-0.9zM317.4 142.2h0.9v0.9h-0.9zM305.8 146.3h0.9v0.9h-0.9zM300.6 143.5h0.9v0.9h-0.9zM317.6 152.6h0.9v0.9h-0.9zM305.9 154.4h0.9v0.9h-0.9zM302.1 140.2h0.9v0.9h-0.9zM301.7 147.5h0.9v0.9h-0.9zM317.9 140.6h0.9v0.9h-0.9zM326.1 152.0h0.9v0.9h-0.9zM313.4 150.1h0.9v0.9h-0.9zM320.1 140.6h0.9v0.9h-0.9zM310.7 147.8h0.9v0.9h-0.9zM305.3 144.7h0.9v0.9h-0.9zM320.6 144.6h0.9v0.9h-0.9zM305.8 144.8h0.9v0.9h-0.9zM304.9 143.6h0.9v0.9h-0.9zM309.9 152.3h0.9v0.9h-0.9zM319.1 148.6h0.9v0.9h-0.9zM312.8 147.5h0.9v0.9h-0.9zM313.1 147.3h0.9v0.9h-0.9zM321.6 154.4h0.9v0.9h-0.9zM315.3 153.6h0.9v0.9h-0.9zM314.0 144.0h0.9v0.9h-0.9zM304.2 152.6h0.9v0.9h-0.9zM318.5 145.1h0.9v0.9h-0.9zM311.5 146.2h0.9v0.9h-0.9zM307.4 140.9h0.9v0.9h-0.9zM311.1 147.2h0.9v0.9h-0.9zM319.3 141.2h0.9v0.9h-0.9zM298.3 153.2h0.9v0.9h-0.9zM310.1 151.0h0.9v0.9h-0.9zM324.0 145.1h0.9v0.9h-0.9zM322.1 152.9h0.9v0.9h-0.9zM323.2 150.4h0.9v0.9h-0.9z" fill="#f03010"/><path d="M316.3 133.8h1.0v1.0h-1.0zM301.9 133.8h1.0v1.0h-1.0zM315.3 138.0h1.0v1.0h-1.0zM307.4 134.4h1.0v1.0h-1.0zM323.9 138.2h1.0v1.0h-1.0zM321.8 136.3h1.0v1.0h-1.0zM307.0 133.6h1.0v1.0h-1.0zM305.3 136.9h1.0v1.0h-1.0zM322.1 135.6h1.0v1.0h-1.0zM303.0 138.0h1.0v1.0h-1.0zM312.2 133.5h1.0v1.0h-1.0zM322.7 133.8h1.0v1.0h-1.0zM311.4 134.2h1.0v1.0h-1.0zM303.8 133.6h1.0v1.0h-1.0zM304.0 138.2h1.0v1.0h-1.0zM315.3 137.7h1.0v1.0h-1.0zM323.4 137.6h1.0v1.0h-1.0zM311.6 134.1h1.0v1.0h-1.0zM321.9 134.5h1.0v1.0h-1.0zM313.6 138.3h1.0v1.0h-1.0zM309.3 137.0h1.0v1.0h-1.0zM305.0 136.2h1.0v1.0h-1.0zM316.2 134.9h1.0v1.0h-1.0zM314.8 138.4h1.0v1.0h-1.0zM318.2 136.2h1.0v1.0h-1.0zM301.4 134.6h1.0v1.0h-1.0zM321.1 137.4h1.0v1.0h-1.0zM316.8 135.4h1.0v1.0h-1.0zM312.3 135.7h1.0v1.0h-1.0zM309.0 136.3h1.0v1.0h-1.0z" fill="#d8d880"/><path d="M317.4 122.7h1.1v1.1h-1.1zM312.7 122.3h1.1v1.1h-1.1zM307.0 125.5h1.1v1.1h-1.1zM308.1 122.7h1.1v1.1h-1.1zM304.5 124.1h1.1v1.1h-1.1zM318.3 126.1h1.1v1.1h-1.1zM303.0 125.1h1.1v1.1h-1.1zM311.2 126.6h1.1v1.1h-1.1zM308.3 123.8h1.1v1.1h-1.1zM321.6 126.9h1.1v1.1h-1.1zM306.2 125.5h1.1v1.1h-1.1zM301.8 126.6h1.1v1.1h-1.1zM304.2 123.4h1.1v1.1h-1.1zM314.7 126.1h1.1v1.1h-1.1zM310.3 122.6h1.1v1.1h-1.1zM306.1 126.8h1.1v1.1h-1.1zM317.1 123.9h1.1v1.1h-1.1zM316.8 122.7h1.1v1.1h-1.1zM305.3 122.4h1.1v1.1h-1.1zM308.7 122.9h1.1v1.1h-1.1zM308.0 124.0h1.1v1.1h-1.1zM301.8 126.7h1.1v1.1h-1.1zM318.4 124.6h1.1v1.1h-1.1zM313.2 125.1h1.1v1.1h-1.1zM321.0 125.4h1.1v1.1h-1.1zM316.9 121.7h1.1v1.1h-1.1zM309.5 124.9h1.1v1.1h-1.1zM319.3 125.5h1.1v1.1h-1.1zM319.0 121.6h1.1v1.1h-1.1zM314.9 125.5h1.1v1.1h-1.1zM315.5 125.3h1.1v1.1h-1.1zM318.6 123.2h1.1v1.1h-1.1zM306.0 121.8h1.1v1.1h-1.1zM314.6 124.3h1.1v1.1h-1.1z" fill="#dcdc80"/><path d="M313.6 136.0h1.0v1.0h-1.0zM320.8 135.0h1.0v1.0h-1.0zM315.2 134.6h1.0v1.0h-1.0zM308.1 133.5h1.0v1.0h-1.0zM311.4 137.0h1.0v1.0h-1.0zM315.0 132.2h1.0v1.0h-1.0zM318.3 134.5h1.0v1.0h-1.0zM312.1 134.2h1.0v1.0h-1.0zM306.6 131.3h1.0v1.0h-1.0zM313.2 131.7h1.0v1.0h-1.0zM316.6 130.6h1.0v1.0h-1.0zM319.0 133.4h1.0v1.0h-1.0zM304.9 136.9h1.0v1.0h-1.0zM309.6 131.4h1.0v1.0h-1.0zM308.0 129.6h1.0v1.0h-1.0zM302.3 131.7h1.0v1.0h-1.0zM311.4 132.2h1.0v1.0h-1.0zM318.6 135.4h1.0v1.0h-1.0zM309.8 132.7h1.0v1.0h-1.0zM302.3 132.9h1.0v1.0h-1.0zM307.2 128.7h1.0v1.0h-1.0zM320.1 128.5h1.0v1.0h-1.0zM318.0 128.3h1.0v1.0h-1.0zM302.7 129.2h1.0v1.0h-1.0zM322.0 133.7h1.0v1.0h-1.0zM314.4 131.2h1.0v1.0h-1.0z" fill="#d0d878"/><path d="M304.4 128.1h0.9v0.9h-0.9zM317.6 132.7h0.9v0.9h-0.9zM312.0 126.8h0.9v0.9h-0.9zM316.4 132.3h0.9v0.9h-0.9zM317.5 122.1h0.9v0.9h-0.9zM305.0 133.6h0.9v0.9h-0.9zM305.0 124.2h0.9v0.9h-0.9zM312.1 125.5h0.9v0.9h-0.9zM312.9 125.4h0.9v0.9h-0.9zM304.4 132.7h0.9v0.9h-0.9z" fill="#f03010"/><path d="M318.2 113.4h0.9v0.9h-0.9zM309.3 104.7h0.9v0.9h-0.9zM305.5 109.8h0.9v0.9h-0.9zM319.1 109.6h0.9v0.9h-0.9zM306.7 112.1h0.9v0.9h-0.9zM315.9 105.5h0.9v0.9h-0.9zM314.0 108.9h0.9v0.9h-0.9zM318.7 117.8h0.9v0.9h-0.9zM315.7 107.9h0.9v0.9h-0.9zM311.1 106.1h0.9v0.9h-0.9zM311.1 107.9h0.9v0.9h-0.9zM313.0 109.6h0.9v0.9h-0.9z" fill="#c8e070"/><circle cx="306.9" cy="107.2" r="0.900" fill="#001000"/><circle cx="310.4" cy="107.2" r="0.900" fill="#001000"/><circle cx="313.9" cy="107.2" r="0.900" fill="#001000"/><circle cx="317.4" cy="107.2" r="0.900" fill="#001000"/><circle cx="305.1" cy="119.7" r="0.900" fill="#001000"/><circle cx="308.6" cy="119.7" r="0.900" fill="#001000"/><circle cx="312.1" cy="119.7" r="0.900" fill="#001000"/><circle cx="315.6" cy="119.7" r="0.900" fill="#001000"/><circle cx="319.1" cy="119.7" r="0.900" fill="#001000"/><circle cx="305.8" cy="135.3" r="0.900" fill="#001000"/><circle cx="310.0" cy="135.3" r="0.900" fill="#001000"/><circle cx="314.2" cy="135.3" r="0.900" fill="#001000"/><circle cx="318.4" cy="135.3" r="0.900" fill="#001000"/><circle cx="305.4" cy="109.3" r="1.300" fill="#e0d890"/><circle cx="318.6" cy="109.3" r="1.300" fill="#e0d890"/><circle cx="302.4" cy="129.2" r="1.300" fill="#e0d890"/><circle cx="321.8" cy="129.2" r="1.300" fill="#e0d890"/><rect x="310.6" y="110.800" width="1" height="6.200" fill="#a03818"/><rect x="312.6" y="110.800" width="1" height="6.200" fill="#a03818"/><rect x="305.1" y="115.700" width="4.200" height="1.600" fill="#e04020"/><rect x="306.1" y="117.300" width="1.500" height="1.500" fill="#e04020"/><rect x="316.1" y="115" width="3.500" height="1.800" fill="none" stroke="#c8d870" stroke-width="0.500"/><rect x="310.9" y="131.500" width="0.900" height="4" fill="#a05030"/><rect x="312.8" y="131.500" width="0.900" height="4" fill="#a05030"/><path d="M300.2 154H324.2" stroke="#b03010" stroke-width="1.600" stroke-dasharray="1.2 0.9"/><path d="M301.2 154H323.2" stroke="#202000" stroke-width="1.200" stroke-dasharray="0.700 2.300"/><path d="M331.500 120.500H344V160H331.500z" fill="none" stroke="#0000cc" stroke-width="0.8"/><path d="M333 122.500h9.500v3.500h-6v8h4.500v24h-8z" fill="none" stroke="#ff0000" stroke-width="0.9"/><path d="M334.6 148.7L336.6 146.7M341.0 158.2L341.0 158.5M337.8 134.4L338.5 135.1M341.9 140.5L341.9 141.9M341.8 148.9L342.5 147.2M338.9 128.1L340.2 127.0M339.6 147.4L342.5 147.4M334.5 152.8L335.8 152.8M337.3 144.4L338.7 143.0M334.4 148.0L334.4 150.4M333.7 133.2L336.7 133.2M334.2 142.0L334.2 145.5M336.2 131.6L338.1 133.4M336.5 141.2L338.0 139.7M336.7 127.8L337.6 127.0M333.0 129.2L333.0 132.0M338.4 137.0L342.4 137.0M334.7 132.4L336.1 133.8M336.3 145.8L338.2 145.8M334.6 156.1L335.7 155.0M336.6 148.5L336.6 151.6M336.9 158.2L340.8 158.2M341.4 142.5L341.4 144.6M341.9 134.7L342.5 132.9M340.7 151.4L342.4 153.1M333.5 135.1L334.8 133.8M335.4 139.4L335.4 143.0M342.3 150.5L342.5 152.2M334.3 147.5L336.9 144.9M333.3 133.7L333.3 137.2M341.4 145.9L342.5 144.3M335.9 143.8L337.8 143.8M336.6 131.0L338.8 133.2M338.6 147.3L341.1 144.8M335.4 139.8L335.4 143.7M334.3 130.0L335.6 130.0M339.1 151.8L340.3 151.8M339.2 131.0L341.1 132.8M336.8 155.0L336.8 157.8M334.7 138.9L337.9 138.9M338.7 142.9L342.0 142.9M340.5 127.2L342.5 127.2M336.8 144.9L336.8 148.4M335.4 148.9L337.3 148.9M335.3 131.9L337.5 134.1M340.8 152.3L342.5 152.3M338.2 128.9L340.1 130.8M342.2 136.8L342.2 139.9M333.6 152.7L336.4 155.4M333.6 147.7L335.9 147.7M339.2 146.7L341.6 144.3M337.8 156.8L339.9 154.7M337.5 143.2L341.1 143.2M335.1 128.5L335.1 130.8M335.6 145.6L337.2 144.0M337.3 134.4L338.8 132.9M335.2 155.8L338.1 155.8M337.6 142.5L337.6 145.6M340.4 146.7L342.5 149.0M335.3 155.9L336.8 154.4" stroke="#ff0000" stroke-width="1.0" fill="none"/><rect x="332.300" y="126" width="1.600" height="32" fill="#e0c070" fill-opacity="0.800"/><path d="M340.8 155.4L342.0 155.4M336.1 143.2L336.1 146.9M335.6 142.8L337.4 141.0M340.2 147.4L340.2 148.7M339.9 143.3L339.9 145.3M336.8 155.2L338.2 156.0M341.6 155.5L341.6 156.0M336.7 151.0L336.7 154.2" stroke="#00ff00" stroke-width="0.7" fill="none"/><path d="M335.8 139.9h0.8v0.8h-0.8zM334.0 145.0h0.8v0.8h-0.8zM333.5 129.9h0.8v0.8h-0.8zM333.8 133.3h0.8v0.8h-0.8zM333.2 156.7h0.8v0.8h-0.8zM332.6 151.6h0.8v0.8h-0.8zM335.8 148.0h0.8v0.8h-0.8zM332.6 141.0h0.8v0.8h-0.8z" fill="#ffe880"/><rect x="338.500" y="136" width="3.5" height="5" fill="#ff0000"/><rect x="348.200" y="102.500" width="1.600" height="4" fill="#111"/><use href="#bb" x="121.7" y="160.9"/><use href="#bb" x="182.5" y="160.9"/><use href="#bb" x="121.7" y="263.4"/><use href="#bb" x="182.5" y="263.4"/><use href="#sq" x="249.900" y="161.900"/><use href="#sq" x="298" y="161.900"/><use href="#gb" x="261.700" y="202.3"/><use href="#gb" x="261.700" y="256.9"/><use href="#gb" x="261.700" y="311.6"/><rect x="242.400" y="188.5" width="4.2" height="26.5" fill="#dcdc78"/><path d="M244.500 188.5V215" stroke="#e06040" stroke-opacity="0.55" stroke-width="4.2" stroke-dasharray="0.6 1.3"/><rect x="242.100" y="188.2" width="4.8" height="27.1" fill="none" stroke="#2020a0" stroke-width="0.4"/><rect x="242.400" y="218" width="4.2" height="27.6" fill="#dcdc78"/><path d="M244.500 218V245.6" stroke="#e06040" stroke-opacity="0.55" stroke-width="4.2" stroke-dasharray="0.6 1.3"/><rect x="242.100" y="217.7" width="4.8" height="28.2" fill="none" stroke="#2020a0" stroke-width="0.4"/><rect x="242.400" y="248.6" width="4.2" height="27.7" fill="#dcdc78"/><path d="M244.500 248.6V276.3" stroke="#e06040" stroke-opacity="0.55" stroke-width="4.2" stroke-dasharray="0.6 1.3"/><rect x="242.100" y="248.29999999999998" width="4.8" height="28.3" fill="none" stroke="#2020a0" stroke-width="0.4"/><rect x="242.400" y="279.2" width="4.2" height="26.2" fill="#dcdc78"/><path d="M244.500 279.2V305.4" stroke="#e06040" stroke-opacity="0.55" stroke-width="4.2" stroke-dasharray="0.6 1.3"/><rect x="242.100" y="278.9" width="4.8" height="26.8" fill="none" stroke="#2020a0" stroke-width="0.4"/><rect x="250" y="202.300" width="8.8" height="104.500" fill="none" stroke="#0000cc" stroke-width="0.8"/><rect x="250.900" y="203.300" width="6.4" height="13.700" fill="#f01010"/><path d="M251.2 211.3h0.8v0.8h-0.8zM254.9 206.9h0.8v0.8h-0.8zM251.0 210.5h0.8v0.8h-0.8zM251.5 207.7h0.8v0.8h-0.8zM253.5 214.7h0.8v0.8h-0.8zM253.0 205.6h0.8v0.8h-0.8zM255.4 213.9h0.8v0.8h-0.8zM253.9 204.6h0.8v0.8h-0.8zM252.0 208.8h0.8v0.8h-0.8zM254.0 206.7h0.8v0.8h-0.8z" fill="#ff9060"/><rect x="251.300" y="250" width="5.5" height="11" fill="none" stroke="#d02020" stroke-width="0.7"/><path d="M252 251l4 9M256 251l-4 9" stroke="#e0c040" stroke-width="0.6"/><path d="M254.500 271V284" stroke="#00ff00" stroke-width="1.5" stroke-dasharray="1.5 0.8"/><rect x="251.800" y="285" width="5.400" height="7.500" fill="none" stroke="#00ff00" stroke-width="1"/><rect x="253.200" y="293.500" width="1.5" height="3" fill="#e0e060"/><path d="M241.9 309.3h5l1.600 1.600v24.100h-6.600z" fill="none" stroke="#0000cc" stroke-width="0.8"/><path d="M244.1 312.3c3 4 -1 8 1.5 20" fill="none" stroke="#ff0000" stroke-width="1.3"/><path d="M245.5 311.8c2 6 -2.500 10 0.500 21" fill="none" stroke="#00ff00" stroke-width="0.9"/><circle cx="245.5" cy="314.3" r="1.1" fill="#e0e060"/><path d="M241.9 337.9h5l1.600 1.600v24.100h-6.600z" fill="none" stroke="#0000cc" stroke-width="0.8"/><path d="M244.1 340.9c3 4 -1 8 1.5 20" fill="none" stroke="#ff0000" stroke-width="1.3"/><path d="M245.5 340.4c2 6 -2.500 10 0.500 21" fill="none" stroke="#00ff00" stroke-width="0.9"/><circle cx="245.5" cy="342.9" r="1.1" fill="#e0e060"/><path d="M251.7 309.3h5l1.600 1.600v24.100h-6.600z" fill="none" stroke="#0000cc" stroke-width="0.8"/><path d="M253.89999999999998 312.3c3 4 -1 8 1.5 20" fill="none" stroke="#ff0000" stroke-width="1.3"/><path d="M255.29999999999998 311.8c2 6 -2.500 10 0.500 21" fill="none" stroke="#00ff00" stroke-width="0.9"/><circle cx="255.29999999999998" cy="314.3" r="1.1" fill="#e0e060"/><path d="M251.7 337.9h5l1.600 1.600v24.100h-6.600z" fill="none" stroke="#0000cc" stroke-width="0.8"/><path d="M253.89999999999998 340.9c3 4 -1 8 1.5 20" fill="none" stroke="#ff0000" stroke-width="1.3"/><path d="M255.29999999999998 340.4c2 6 -2.500 10 0.500 21" fill="none" stroke="#00ff00" stroke-width="0.9"/><circle cx="255.29999999999998" cy="342.9" r="1.1" fill="#e0e060"/></g></svg>
<div class="t" style="top:404px;font-size:7.7px;transform:scaleX(0.878);transform-origin:left center;left:87.5px;">Offset X</div>
<div class="inp dis" style="left:114.2px;top:402px;width:63.5px;height:11.5px;"></div>
<div class="t" style="top:404px;font-size:7.7px;color:#a8a594;left:116.0px;">0</div>
<div class="t" style="top:404px;font-size:7.7px;left:180.3px;">Y</div>
<div class="inp dis" style="left:187.3px;top:402px;width:63.4px;height:11.5px;"></div>
<div class="t" style="top:404px;font-size:7.7px;color:#a8a594;left:189.0px;">0</div>
<div class="t" style="top:404px;font-size:7.7px;transform:scaleX(0.897);transform-origin:left center;left:253.5px;">Repeat X</div>
<div class="inp dis" style="left:284.5px;top:402px;width:33.2px;height:11.5px;"></div>
<div class="t" style="top:404px;font-size:7.7px;color:#a8a594;left:286.3px;">0</div>
<div class="t" style="top:404px;font-size:7.7px;left:320.3px;">Y</div>
<div class="inp dis" style="left:327px;top:402px;width:33px;height:11.5px;"></div>
<div class="t" style="top:404px;font-size:7.7px;color:#a8a594;left:328.8px;">0</div>
<div class="a" style="left:363.5px;top:402px;width:10px;height:10px;border:1px solid #d8d5c6;background:#f4f3ec;box-sizing:border-box;"><svg width="8" height="8" viewBox="0 0 8 8"><path d="M1.2 4.500L3 7L7 0.500" stroke="#555" stroke-width="0.9" fill="none"/></svg></div>
<div class="a" style="left:6px;top:400.300px;width:450px;height:1px;background:#a3adb0;"></div>
<div class="a" style="left:6px;top:413.800px;width:451px;height:2px;background:#fbfaf5;"></div>
<div class="a" style="left:4.800px;top:415.700px;width:452px;height:1.200px;background:#7d7b6b;"></div>
<div class="a" style="left:455px;top:67px;width:1.500px;height:349px;background:#f4f3ec;"></div>
<div class="a" style="left:456.500px;top:54px;width:2.500px;height:486px;background:#fbfaf5;"></div>
<div class="grp" style="left:6.5px;top:421.5px;width:346px;height:113.5px;"></div>
<div class="a" style="left:10px;top:417px;width:50px;height:9px;background:#ece9d8;"></div>
<div class="t" style="top:418px;font-size:7.3px;transform:scaleX(0.913);transform-origin:left center;color:#2257d6;left:11.2px;">Job List - Untitled</div>
<div class="btn " style="left:10.6px;top:429.6px;width:14px;height:14px;"><svg width="14" height="14" viewBox="0 0 14 14"><defs><linearGradient id="dg" x1="0" y1="0" x2="1" y2="1"><stop offset="0" stop-color="#f4f7fd"/><stop offset="0.45" stop-color="#b9cdf0"/><stop offset="0.55" stop-color="#8fb0e8"/><stop offset="1" stop-color="#e4ecfa"/></linearGradient></defs><path d="M3.300 1.800h5l2.500 2.500V12h-7.500z" fill="url(#dg)" stroke="#50505a" stroke-width="0.900"/><path d="M8.300 1.800v2.500h2.500" fill="none" stroke="#50505a" stroke-width="0.700"/><circle cx="10.600" cy="10.800" r="2.100" fill="#5c5c5c"/><circle cx="10.500" cy="11" r="0.600" fill="#ddd"/></svg></div>
<div class="btn " style="left:30.3px;top:429.6px;width:14px;height:14px;"><svg width="14" height="14" viewBox="0 0 14 14"><path d="M4 5.500l1.500-1.500h6v5.500" fill="#e8d8b0" stroke="#444" stroke-width="0.800"/><path d="M2 7l2-1.500h7.500v6H4z" fill="#f3e6b4" stroke="#3c3c3c" stroke-width="0.900"/><path d="M4.500 8.500h6.500" stroke="#d09890" stroke-width="0.900"/><path d="M4.500 10h6.500" stroke="#c8b878" stroke-width="0.700"/></svg></div>
<div class="btn dis" style="left:50px;top:429.6px;"><svg width="14" height="14" viewBox="0 0 14 14"><rect x="2.200" y="2" width="10.500" height="10.500" rx="1" fill="#a4a4a4"/></svg></div>
<div class="btn " style="left:69.5px;top:429.6px;width:14px;height:14px;"><svg width="14" height="14" viewBox="0 0 14 14"><rect x="2.500" y="1.800" width="9.500" height="8.700" rx="0.500" fill="#bcbcbc" stroke="#3a3a3a" stroke-width="1"/><rect x="4" y="2.300" width="6.500" height="3.300" fill="#f8f8f8"/><rect x="8" y="2.500" width="1.600" height="2.500" fill="#3c3cc8"/><rect x="3.800" y="6.800" width="6.900" height="3.200" fill="#e4e4e4"/><path d="M4 12h2.500M7.500 12.300h1M9.500 12.300h1M11.500 12.300h1" stroke="#222" stroke-width="1"/></svg></div>
<div class="btn " style="left:91.6px;top:429.6px;width:14px;height:14px;"><svg width="14" height="14" viewBox="0 0 14 14"><path d="M2 4.500h9M2 6.500h9M2 8.500h9" stroke="#d02020" stroke-width="0.7"/><path d="M2 5.500h9M2 7.500h9" stroke="#20a040" stroke-width="0.6"/><path d="M4.500 2v9.500M7 2v9.500" stroke="#2020c0" stroke-width="1"/><circle cx="10.500" cy="10.800" r="1.800" fill="#8a8a8a"/></svg></div>
<div class="btn " style="left:110.2px;top:429.6px;width:14px;height:14px;"><svg width="14" height="14" viewBox="0 0 14 14"><path d="M2.500 5.500h9M2.500 8h9" stroke="#222" stroke-width="0.8"/><path d="M5 2v10M8 2v10" stroke="#2020c0" stroke-width="1"/><path d="M2.500 2.500L11 11.500M11 2.500L2.500 11.500" stroke="#e00000" stroke-width="1.500"/></svg></div>
<div class="a" style="left:9.7px;top:449.700px;width:340px;height:83px;background:#fff;border:1px solid #a9bdd2;box-sizing:border-box;"></div>
<div class="a" style="left:10.2px;top:450.2px;width:339px;height:11px;background:linear-gradient(#f7f6ef 0%,#ece9d8 75%,#d6d2c2 100%);"></div>
<div class="t" style="top:451px;font-size:7.3px;transform:scaleX(0.890);transform-origin:left center;left:14.2px;">Job N...</div>
<div class="a" style="left:39.5px;top:452px;width:1px;height:8px;background:#c8c5b4;"></div>
<div class="t" style="top:451px;font-size:7.3px;transform:scaleX(0.890);transform-origin:left center;left:45.6px;">Job P...</div>
<div class="a" style="left:71.2px;top:452px;width:1px;height:8px;background:#c8c5b4;"></div>
<div class="t" style="top:451px;font-size:7.3px;transform:scaleX(0.890);transform-origin:left center;left:75.5px;"># Req...</div>
<div class="a" style="left:100.9px;top:452px;width:1px;height:8px;background:#c8c5b4;"></div>
<div class="t" style="top:451px;font-size:7.3px;transform:scaleX(0.890);transform-origin:left center;left:105.5px;"># Opti...</div>
<div class="a" style="left:131.3px;top:452px;width:1px;height:8px;background:#c8c5b4;"></div>
<div class="t" style="top:451px;font-size:7.3px;transform:scaleX(0.890);transform-origin:left center;left:136.8px;">#/panel</div>
<div class="a" style="left:162.1px;top:452px;width:1px;height:8px;background:#c8c5b4;"></div>
<div class="t" style="top:451px;font-size:7.3px;transform:scaleX(0.890);transform-origin:left center;left:167.7px;">#/batch</div>
<div class="a" style="left:193.0px;top:452px;width:1px;height:8px;background:#c8c5b4;"></div>
<div class="t" style="top:451px;font-size:7.3px;transform:scaleX(0.890);transform-origin:left center;left:196.9px;">Min. C...</div>
<div class="a" style="left:223.4px;top:452px;width:1px;height:8px;background:#c8c5b4;"></div>
<div class="t" style="top:451px;font-size:7.3px;transform:scaleX(0.890);transform-origin:left center;left:228.0px;">Min. F...</div>
<div class="a" style="left:253.8px;top:452px;width:1px;height:8px;background:#c8c5b4;"></div>
<div class="t" style="top:451px;font-size:7.3px;transform:scaleX(0.890);transform-origin:left center;left:257.9px;">Min. Id...</div>
<div class="a" style="left:285.4px;top:452px;width:1px;height:8px;background:#c8c5b4;"></div>
<div class="t" style="top:451px;font-size:7.3px;transform:scaleX(0.890);transform-origin:left center;left:290.7px;">Rotati...</div>
<div class="a" style="left:316.7px;top:452px;width:1px;height:8px;background:#c8c5b4;"></div>
<div class="t" style="top:451px;font-size:7.3px;transform:scaleX(0.890);transform-origin:left center;left:322.4px;">Targe...</div>
<div class="a" style="left:348.1px;top:452px;width:1px;height:8px;background:#c8c5b4;"></div>
<div class="a" style="left:10.2px;top:461.7px;width:339px;height:8.3px;background:#2c62c6;"></div>
<div class="a" style="left:10.2px;top:461.7px;width:29.5px;height:8.3px;background:#3f6fc9;outline:0.5px dotted #c8d8f8;outline-offset:-0.5px;"></div>
<div class="t" style="top:462px;font-size:7.3px;transform:scaleX(0.924);transform-origin:left center;color:#dfe8fa;left:11.1px;">E339628</div>
<div class="t" style="top:462px;font-size:7.3px;transform:scaleX(0.869);transform-origin:left center;color:#fff;left:41.6px;">D:\data\...</div>
<div class="t" style="top:462px;font-size:7.3px;color:#fff;right:567.7px;">4</div>
<div class="t" style="top:462px;font-size:7.3px;color:#fff;right:537.3px;">-1</div>
<div class="t" style="top:462px;font-size:7.3px;color:#fff;right:506.5px;">4</div>
<div class="t" style="top:462px;font-size:7.3px;color:#fff;right:475.6px;">4</div>
<div class="t" style="top:462px;font-size:7.3px;color:#fff;right:445.2px;">0</div>
<div class="t" style="top:462px;font-size:7.3px;color:#fff;right:414.8px;">-1</div>
<div class="t" style="top:462px;font-size:7.3px;color:#fff;right:383.2px;">-1</div>
<div class="a" style="left:299px;top:462.4px;width:6.800px;height:6.800px;background:#fff;border:0.8px solid #4a6a96;box-sizing:border-box;"><svg width="5.400" height="5.400" viewBox="0 0 6 6"><path d="M0.800 3L2.300 4.800L5.200 1" stroke="#21a121" stroke-width="1.300" fill="none"/></svg></div>
<div class="t" style="top:462px;font-size:7.3px;color:#fff;right:320.5px;">0</div>
<div class="a" style="left:10.2px;top:478.7px;width:339px;height:0.5px;background:#d8d8d8;"></div>
<div class="t" style="top:470px;font-size:7.3px;transform:scaleX(0.924);transform-origin:left center;left:11.1px;">E339435</div>
<div class="t" style="top:470px;font-size:7.3px;transform:scaleX(0.869);transform-origin:left center;left:41.6px;">D:\data\...</div>
<div class="t" style="top:470px;font-size:7.3px;right:567.7px;">1</div>
<div class="t" style="top:470px;font-size:7.3px;right:537.3px;">-1</div>
<div class="t" style="top:470px;font-size:7.3px;right:506.5px;">1</div>
<div class="t" style="top:470px;font-size:7.3px;right:475.6px;">1</div>
<div class="t" style="top:470px;font-size:7.3px;right:445.2px;">0</div>
<div class="t" style="top:470px;font-size:7.3px;right:414.8px;">-1</div>
<div class="t" style="top:470px;font-size:7.3px;right:383.2px;">-1</div>
<div class="a" style="left:299px;top:471.1px;width:6.800px;height:6.800px;background:#fff;border:0.8px solid #4a6a96;box-sizing:border-box;"><svg width="5.400" height="5.400" viewBox="0 0 6 6"><path d="M0.800 3L2.300 4.800L5.200 1" stroke="#21a121" stroke-width="1.300" fill="none"/></svg></div>
<div class="t" style="top:470px;font-size:7.3px;right:320.5px;">0</div>
<div class="a" style="left:10.2px;top:487.4px;width:339px;height:0.5px;background:#d8d8d8;"></div>
<div class="t" style="top:479px;font-size:7.3px;transform:scaleX(0.924);transform-origin:left center;left:11.1px;">E339370</div>
<div class="t" style="top:479px;font-size:7.3px;transform:scaleX(0.869);transform-origin:left center;left:41.6px;">D:\data\...</div>
<div class="t" style="top:479px;font-size:7.3px;right:567.7px;">4</div>
<div class="t" style="top:479px;font-size:7.3px;right:537.3px;">-1</div>
<div class="t" style="top:479px;font-size:7.3px;right:506.5px;">4</div>
<div class="t" style="top:479px;font-size:7.3px;right:475.6px;">4</div>
<div class="t" style="top:479px;font-size:7.3px;right:445.2px;">0</div>
<div class="t" style="top:479px;font-size:7.3px;right:414.8px;">-1</div>
<div class="t" style="top:479px;font-size:7.3px;right:383.2px;">-1</div>
<div class="a" style="left:299px;top:479.8px;width:6.800px;height:6.800px;background:#fff;border:0.8px solid #4a6a96;box-sizing:border-box;"><svg width="5.400" height="5.400" viewBox="0 0 6 6"><path d="M0.800 3L2.300 4.800L5.200 1" stroke="#21a121" stroke-width="1.300" fill="none"/></svg></div>
<div class="t" style="top:479px;font-size:7.3px;right:320.5px;">0</div>
<div class="a" style="left:10.2px;top:496.0px;width:339px;height:0.5px;background:#d8d8d8;"></div>
<div class="t" style="top:488px;font-size:7.3px;transform:scaleX(0.924);transform-origin:left center;left:11.1px;">E339350</div>
<div class="t" style="top:488px;font-size:7.3px;transform:scaleX(0.869);transform-origin:left center;left:41.6px;">D:\data\...</div>
<div class="t" style="top:488px;font-size:7.3px;right:567.7px;">1</div>
<div class="t" style="top:488px;font-size:7.3px;right:537.3px;">-1</div>
<div class="t" style="top:488px;font-size:7.3px;right:506.5px;">1</div>
<div class="t" style="top:488px;font-size:7.3px;right:475.6px;">1</div>
<div class="t" style="top:488px;font-size:7.3px;right:445.2px;">0</div>
<div class="t" style="top:488px;font-size:7.3px;right:414.8px;">-1</div>
<div class="t" style="top:488px;font-size:7.3px;right:383.2px;">-1</div>
<div class="a" style="left:299px;top:488.4px;width:6.800px;height:6.800px;background:#fff;border:0.8px solid #4a6a96;box-sizing:border-box;"><svg width="5.400" height="5.400" viewBox="0 0 6 6"><path d="M0.800 3L2.300 4.800L5.200 1" stroke="#21a121" stroke-width="1.300" fill="none"/></svg></div>
<div class="t" style="top:488px;font-size:7.3px;right:320.5px;">0</div>
<div class="a" style="left:10.2px;top:504.7px;width:339px;height:0.5px;background:#d8d8d8;"></div>
<div class="t" style="top:496px;font-size:7.3px;transform:scaleX(0.924);transform-origin:left center;left:11.1px;">E338778</div>
<div class="t" style="top:496px;font-size:7.3px;transform:scaleX(0.869);transform-origin:left center;left:41.6px;">D:\data\...</div>
<div class="t" style="top:496px;font-size:7.3px;right:567.7px;">4</div>
<div class="t" style="top:496px;font-size:7.3px;right:537.3px;">-1</div>
<div class="t" style="top:496px;font-size:7.3px;right:506.5px;">4</div>
<div class="t" style="top:496px;font-size:7.3px;right:475.6px;">4</div>
<div class="t" style="top:496px;font-size:7.3px;right:445.2px;">0</div>
<div class="t" style="top:496px;font-size:7.3px;right:414.8px;">-1</div>
<div class="t" style="top:496px;font-size:7.3px;right:383.2px;">-1</div>
<div class="a" style="left:299px;top:497.1px;width:6.800px;height:6.800px;background:#fff;border:0.8px solid #4a6a96;box-sizing:border-box;"><svg width="5.400" height="5.400" viewBox="0 0 6 6"><path d="M0.800 3L2.300 4.800L5.200 1" stroke="#21a121" stroke-width="1.300" fill="none"/></svg></div>
<div class="t" style="top:496px;font-size:7.3px;right:320.5px;">0</div>
<div class="a" style="left:10.2px;top:513.4px;width:339px;height:0.5px;background:#d8d8d8;"></div>
<div class="t" style="top:505px;font-size:7.3px;transform:scaleX(0.924);transform-origin:left center;left:11.1px;">E338709</div>
<div class="t" style="top:505px;font-size:7.3px;transform:scaleX(0.869);transform-origin:left center;left:41.6px;">D:\data\...</div>
<div class="t" style="top:505px;font-size:7.3px;right:567.7px;">2</div>
<div class="t" style="top:505px;font-size:7.3px;right:537.3px;">-1</div>
<div class="t" style="top:505px;font-size:7.3px;right:506.5px;">2</div>
<div class="t" style="top:505px;font-size:7.3px;right:475.6px;">2</div>
<div class="t" style="top:505px;font-size:7.3px;right:445.2px;">0</div>
<div class="t" style="top:505px;font-size:7.3px;right:414.8px;">-1</div>
<div class="t" style="top:505px;font-size:7.3px;right:383.2px;">-1</div>
<div class="a" style="left:299px;top:505.8px;width:6.800px;height:6.800px;background:#fff;border:0.8px solid #4a6a96;box-sizing:border-box;"><svg width="5.400" height="5.400" viewBox="0 0 6 6"><path d="M0.800 3L2.300 4.800L5.200 1" stroke="#21a121" stroke-width="1.300" fill="none"/></svg></div>
<div class="t" style="top:505px;font-size:7.3px;right:320.5px;">0</div>
<div class="a" style="left:10.2px;top:522.1px;width:339px;height:0.5px;background:#d8d8d8;"></div>
<div class="t" style="top:514px;font-size:7.3px;transform:scaleX(0.924);transform-origin:left center;left:11.1px;">E338403</div>
<div class="t" style="top:514px;font-size:7.3px;transform:scaleX(0.869);transform-origin:left center;left:41.6px;">D:\data\...</div>
<div class="t" style="top:514px;font-size:7.3px;right:567.7px;">6</div>
<div class="t" style="top:514px;font-size:7.3px;right:537.3px;">-1</div>
<div class="t" style="top:514px;font-size:7.3px;right:506.5px;">6</div>
<div class="t" style="top:514px;font-size:7.3px;right:475.6px;">6</div>
<div class="t" style="top:514px;font-size:7.3px;right:445.2px;">0</div>
<div class="t" style="top:514px;font-size:7.3px;right:414.8px;">-1</div>
<div class="t" style="top:514px;font-size:7.3px;right:383.2px;">-1</div>
<div class="a" style="left:299px;top:514.5px;width:6.800px;height:6.800px;background:#fff;border:0.8px solid #4a6a96;box-sizing:border-box;"><svg width="5.400" height="5.400" viewBox="0 0 6 6"><path d="M0.800 3L2.300 4.800L5.200 1" stroke="#21a121" stroke-width="1.300" fill="none"/></svg></div>
<div class="t" style="top:514px;font-size:7.3px;right:320.5px;">0</div>
<div class="a" style="left:10.2px;top:530.8px;width:339px;height:0.5px;background:#d8d8d8;"></div>
<div class="t" style="top:522px;font-size:7.3px;transform:scaleX(0.924);transform-origin:left center;left:11.1px;">E338366</div>
<div class="t" style="top:522px;font-size:7.3px;transform:scaleX(0.869);transform-origin:left center;left:41.6px;">D:\data\...</div>
<div class="t" style="top:522px;font-size:7.3px;right:567.7px;">3</div>
<div class="t" style="top:522px;font-size:7.3px;right:537.3px;">-1</div>
<div class="t" style="top:522px;font-size:7.3px;right:506.5px;">3</div>
<div class="t" style="top:522px;font-size:7.3px;right:475.6px;">3</div>
<div class="t" style="top:522px;font-size:7.3px;right:445.2px;">0</div>
<div class="t" style="top:522px;font-size:7.3px;right:414.8px;">-1</div>
<div class="t" style="top:522px;font-size:7.3px;right:383.2px;">-1</div>
<div class="a" style="left:299px;top:523.2px;width:6.800px;height:6.800px;background:#fff;border:0.8px solid #4a6a96;box-sizing:border-box;"><svg width="5.400" height="5.400" viewBox="0 0 6 6"><path d="M0.800 3L2.300 4.800L5.200 1" stroke="#21a121" stroke-width="1.300" fill="none"/></svg></div>
<div class="t" style="top:522px;font-size:7.3px;right:320.5px;">0</div>
<div class="a" style="left:39.5px;top:461.5px;width:1px;height:69.800px;background:rgba(200,200,200,0.55);"></div>
<div class="a" style="left:71.2px;top:461.5px;width:1px;height:69.800px;background:rgba(200,200,200,0.55);"></div>
<div class="a" style="left:100.9px;top:461.5px;width:1px;height:69.800px;background:rgba(200,200,200,0.55);"></div>
<div class="a" style="left:131.3px;top:461.5px;width:1px;height:69.800px;background:rgba(200,200,200,0.55);"></div>
<div class="a" style="left:162.1px;top:461.5px;width:1px;height:69.800px;background:rgba(200,200,200,0.55);"></div>
<div class="a" style="left:193.0px;top:461.5px;width:1px;height:69.800px;background:rgba(200,200,200,0.55);"></div>
<div class="a" style="left:223.4px;top:461.5px;width:1px;height:69.800px;background:rgba(200,200,200,0.55);"></div>
<div class="a" style="left:253.8px;top:461.5px;width:1px;height:69.800px;background:rgba(200,200,200,0.55);"></div>
<div class="a" style="left:285.4px;top:461.5px;width:1px;height:69.800px;background:rgba(200,200,200,0.55);"></div>
<div class="a" style="left:316.7px;top:461.5px;width:1px;height:69.800px;background:rgba(200,200,200,0.55);"></div>
<svg class="a" style="left:354.700px;top:417px;" width="101.3" height="121.500" viewBox="354.700 417 101.3 121.500"><rect x="354" y="417" width="103" height="122" fill="#000"/><g transform="translate(362.700 503.800) rotate(-90) scale(0.902 0.913)"><use href="#bb"/></g></svg>
<div class="a" style="left:353px;top:417px;width:1px;height:121px;background:#fcfcfe;"></div>
<div class="a" style="left:457px;top:54px;width:2.500px;height:487px;background:#f8f7f1;"></div>
<div class="a" style="left:459.300px;top:53px;width:1.700px;height:486px;background:#7f8078;"></div>
<div class="a" style="left:661.500px;top:54px;width:1px;height:488px;background:#d9d6c6;"></div>
<div class="a" style="left:461px;top:164.7px;width:201px;height:1px;background:#a9bccf;"></div>
<div class="a" style="left:459.500px;top:165.7px;width:203px;height:2px;background:#fbfaf5;"></div>
<div class="a" style="left:459.500px;top:167.5px;width:202px;height:1px;background:#85837a;"></div>
<div class="a" style="left:461px;top:297.3px;width:201px;height:1px;background:#a9bccf;"></div>
<div class="a" style="left:459.500px;top:298.3px;width:203px;height:2px;background:#fbfaf5;"></div>
<div class="a" style="left:459.500px;top:300.1px;width:202px;height:1px;background:#85837a;"></div>
<div class="grp" style="left:462px;top:59.500px;width:198px;height:103px;"></div>
<div class="a" style="left:465px;top:55px;width:188px;height:9px;background:#ece9d8;"></div>
<div class="t" style="top:55px;font-size:7.3px;transform:scaleX(0.922);transform-origin:left center;color:#2257d6;left:466.3px;">Panel Properties - D:\data\PanelEditor\PanelJobs\Sample1.prf</div>
<div class="btn " style="left:464.3px;top:67px;width:14px;height:14px;"><svg width="14" height="14" viewBox="0 0 14 14"><defs><linearGradient id="dg" x1="0" y1="0" x2="1" y2="1"><stop offset="0" stop-color="#f4f7fd"/><stop offset="0.45" stop-color="#b9cdf0"/><stop offset="0.55" stop-color="#8fb0e8"/><stop offset="1" stop-color="#e4ecfa"/></linearGradient></defs><path d="M3.300 1.800h5l2.500 2.500V12h-7.500z" fill="url(#dg)" stroke="#50505a" stroke-width="0.900"/><path d="M8.300 1.800v2.500h2.500" fill="none" stroke="#50505a" stroke-width="0.700"/><circle cx="10.600" cy="10.800" r="2.100" fill="#5c5c5c"/><circle cx="10.500" cy="11" r="0.600" fill="#ddd"/></svg></div>
<div class="btn " style="left:484px;top:67px;width:14px;height:14px;"><svg width="14" height="14" viewBox="0 0 14 14"><path d="M4 5.500l1.500-1.500h6v5.500" fill="#e8d8b0" stroke="#444" stroke-width="0.800"/><path d="M2 7l2-1.500h7.500v6H4z" fill="#f3e6b4" stroke="#3c3c3c" stroke-width="0.900"/><path d="M4.500 8.500h6.500" stroke="#d09890" stroke-width="0.900"/><path d="M4.500 10h6.500" stroke="#c8b878" stroke-width="0.700"/></svg></div>
<div class="btn " style="left:503.7px;top:67px;width:14px;height:14px;"><svg width="14" height="14" viewBox="0 0 14 14"><rect x="2.500" y="2.500" width="9.500" height="9.500" rx="0.500" fill="#bcbcbc" stroke="#3a3a3a" stroke-width="1"/><rect x="4" y="3" width="6.500" height="3.600" fill="#f8f8f8"/><rect x="8" y="3.200" width="1.600" height="2.800" fill="#3c3cc8"/><rect x="3.800" y="7.800" width="6.900" height="3.800" fill="#e4e4e4"/></svg></div>
<div class="btn " style="left:523.5px;top:67px;width:14px;height:14px;"><svg width="14" height="14" viewBox="0 0 14 14"><rect x="2.500" y="1.800" width="9.500" height="8.700" rx="0.500" fill="#bcbcbc" stroke="#3a3a3a" stroke-width="1"/><rect x="4" y="2.300" width="6.500" height="3.300" fill="#f8f8f8"/><rect x="8" y="2.500" width="1.600" height="2.500" fill="#3c3cc8"/><rect x="3.800" y="6.800" width="6.900" height="3.200" fill="#e4e4e4"/><path d="M4 12h2.500M7.500 12.300h1M9.500 12.300h1M11.500 12.300h1" stroke="#222" stroke-width="1"/></svg></div>
<div class="t" style="top:88px;font-size:7.7px;transform:scaleX(0.876);transform-origin:left center;left:463.8px;">Parameter Set</div>
<div class="inp" style="left:510px;top:86.200px;width:108.500px;height:11.500px;"></div>
<div class="t" style="top:88px;font-size:7.7px;transform:scaleX(0.882);transform-origin:left center;left:512.0px;">tip12d</div>
<div class="a" style="left:609px;top:87.2px;width:8.500px;height:9.500px;background:linear-gradient(#cfdcfb,#b4c8f6);border-radius:1px;"><svg width="8.500" height="9.500" viewBox="0 0 8.500 9.500"><path d="M2.300 3.800L4.250 5.800L6.200 3.800" stroke="#2a3e78" stroke-width="1.100" fill="none"/></svg></div>
<div class="btn " style="left:622px;top:84px;width:14px;height:14px;"><svg width="14" height="14" viewBox="0 0 14 14"><rect x="2.500" y="2.500" width="9.500" height="9.500" rx="0.500" fill="#bcbcbc" stroke="#3a3a3a" stroke-width="1"/><rect x="4" y="3" width="6.500" height="3.600" fill="#f8f8f8"/><rect x="8" y="3.200" width="1.600" height="2.800" fill="#3c3cc8"/><rect x="3.800" y="7.800" width="6.900" height="3.800" fill="#e4e4e4"/></svg></div>
<div class="btn " style="left:641.7px;top:84px;width:14px;height:14px;"><svg width="14" height="14" viewBox="0 0 14 14"><path d="M4 4.500h6.500v7.500H4z" fill="#6a6a6a" stroke="#222" stroke-width="0.7"/><path d="M3.300 3.800h8M6 2.800h2.500" stroke="#222" stroke-width="1.100"/><path d="M5.800 5.500v5.500M7.300 5.500v5.500M8.800 5.500v5.500" stroke="#3c3c3c" stroke-width="0.600"/></svg></div>
<div class="t" style="top:105px;font-size:7.7px;transform:scaleX(0.851);transform-origin:left center;left:463.8px;">Frame job</div>
<div class="inp" style="left:509.500px;top:103.6px;width:149px;height:11.400px;"></div>
<div class="t" style="top:105px;font-size:7.7px;transform:scaleX(0.882);transform-origin:left center;left:511.5px;">tip12d</div>
<div class="a" style="left:649.3px;top:104.60000000000001px;width:8.500px;height:9.500px;background:linear-gradient(#cfdcfb,#b4c8f6);border-radius:1px;"><svg width="8.500" height="9.500" viewBox="0 0 8.500 9.500"><path d="M2.300 3.800L4.250 5.800L6.200 3.800" stroke="#2a3e78" stroke-width="1.100" fill="none"/></svg></div>
<div class="t" style="top:120px;font-size:7.7px;transform:scaleX(0.927);transform-origin:left center;left:463.8px;">Coupon set</div>
<div class="inp" style="left:509.500px;top:118.4px;width:149px;height:11.400px;"></div>
<div class="t" style="top:120px;font-size:7.7px;transform:scaleX(0.952);transform-origin:left center;left:511.5px;">default</div>
<div class="a" style="left:649.3px;top:119.4px;width:8.500px;height:9.500px;background:linear-gradient(#cfdcfb,#b4c8f6);border-radius:1px;"><svg width="8.500" height="9.500" viewBox="0 0 8.500 9.500"><path d="M2.300 3.800L4.250 5.800L6.200 3.800" stroke="#2a3e78" stroke-width="1.100" fill="none"/></svg></div>
<div class="t" style="top:134px;font-size:7.7px;transform:scaleX(0.886);transform-origin:left center;left:463.8px;">D-Code</div>
<div class="inp" style="left:509.500px;top:133.0px;width:149px;height:11.400px;"></div>
<div class="t" style="top:149px;font-size:7.7px;transform:scaleX(0.900);transform-origin:left center;left:463.8px;">Order-number</div>
<div class="inp" style="left:509.500px;top:147.9px;width:149px;height:11.400px;"></div>
<div class="t" style="top:149px;font-size:7.7px;transform:scaleX(0.788);transform-origin:left center;left:511.5px;">TXXXXXX</div>
<div class="grp" style="left:462px;top:173.500px;width:198px;height:122.500px;"></div>
<div class="a" style="left:465px;top:169px;width:48px;height:9px;background:#ece9d8;"></div>
<div class="t" style="top:169px;font-size:7.3px;transform:scaleX(0.940);transform-origin:left center;color:#2257d6;left:466.3px;">Editing toolbox</div>
<div class="grp" style="left:465.500px;top:185.500px;width:191px;height:24.500px;"></div>
<div class="a" style="left:468.500px;top:181px;width:23px;height:9px;background:#ece9d8;"></div>
<div class="t" style="top:181px;font-size:7.3px;transform:scaleX(0.936);transform-origin:left center;color:#2257d6;left:469.8px;">Select</div>
<div class="grp" style="left:465.500px;top:217px;width:191px;height:74.500px;"></div>
<div class="a" style="left:468.500px;top:212.500px;width:15px;height:9px;background:#ece9d8;"></div>
<div class="t" style="top:212px;font-size:7.3px;transform:scaleX(0.914);transform-origin:left center;color:#2257d6;left:469.8px;">Edit</div>
<div class="btn sel" style="left:468.4px;top:193px;width:13.2px;height:12.6px;"><svg width="13.2" height="12.6" viewBox="0 0 14 14"><rect x="2.500" y="2.500" width="9.500" height="9.500" fill="#57c765" stroke="#3c3c3c" stroke-width="1"/></svg></div>
<div class="btn " style="left:487.2px;top:193px;width:13.2px;height:12.6px;"><svg width="13.2" height="12.6" viewBox="0 0 14 14"><rect x="2" y="2" width="4.500" height="4.500" fill="#57c765" stroke="#333" stroke-width="0.800"/><rect x="8" y="7.500" width="4.500" height="4.500" fill="#57c765" stroke="#333" stroke-width="0.800"/><rect x="2.300" y="8" width="4" height="4" fill="#fff"/><rect x="8" y="2.300" width="4" height="4" fill="#fff"/></svg></div>
<div class="btn dis" style="left:506px;top:193px;width:13.2px;height:12.6px;"><svg width="13.2" height="12.6" viewBox="0 0 14 14"><rect x="2.500" y="2.500" width="9.500" height="9.500" fill="#9a9a9a" stroke="#a8a8a8" stroke-width="1.400"/></svg></div>
<div class="btn dis" style="left:525px;top:193px;width:13.2px;height:12.6px;"><svg width="13.2" height="12.6" viewBox="0 0 14 14"><rect x="2.500" y="2.500" width="4" height="4" fill="#9a9a9a"/><rect x="8" y="8" width="4" height="4" fill="#9a9a9a"/><path d="M12 2L2 12" stroke="#9a9a9a" stroke-width="0.700"/></svg></div>
<div class="btn dis" style="left:543.4px;top:193px;width:13.2px;height:12.6px;"><svg width="13.2" height="12.6" viewBox="0 0 14 14"><rect x="3" y="6.500" width="3.500" height="2.200" fill="#9a9a9a"/><rect x="8" y="6.500" width="3.500" height="2.200" fill="#9a9a9a"/><rect x="3" y="9.700" width="3.500" height="2.200" fill="#9a9a9a"/><rect x="8" y="9.700" width="3.500" height="2.200" fill="#9a9a9a"/><path d="M4 5V3.200h6.500V5" stroke="#9a9a9a" stroke-width="0.900" fill="none"/></svg></div>
<div class="btn sel" style="left:468.4px;top:224px;width:13px;height:13px;"><svg width="13" height="13" viewBox="0 0 14 14"><rect x="2.500" y="2.500" width="9" height="9" fill="#9a9a1e" stroke="#4a4a10" stroke-width="0.900"/><circle cx="11" cy="11" r="1.700" fill="#999"/></svg></div>
<div class="btn dis" style="left:487.02px;top:224px;width:13px;height:13px;"><svg width="13" height="13" viewBox="0 0 14 14"><path d="M3 2.500h5.500v3.500h3v5.500H6V8H3z" fill="#9a9a9a"/></svg></div>
<div class="btn dis" style="left:505.64px;top:224px;width:13px;height:13px;"><svg width="13" height="13" viewBox="0 0 14 14"><path d="M3 2.500h5.500v3h3v6H6V8.500H3z" fill="#9a9a9a"/></svg></div>
<div class="btn dis" style="left:524.26px;top:224px;width:13px;height:13px;"><svg width="13" height="13" viewBox="0 0 14 14"><rect x="2.800" y="2.500" width="8.500" height="8.500" fill="#9a9a9a" stroke="#a4a4a4" stroke-width="1.200"/><path d="M3 12h1.500M10 12h1.500" stroke="#9a9a9a"/></svg></div>
<div class="btn dis" style="left:542.88px;top:224px;width:13px;height:13px;"><svg width="13" height="13" viewBox="0 0 14 14"><path d="M3 2.500h3v6h6v3H3z" fill="#9a9a9a"/><path d="M8 3.500q3-0.500 3 2.500" stroke="#9a9a9a" stroke-width="0.900" fill="none"/></svg></div>
<div class="btn dis" style="left:561.5px;top:224px;width:13px;height:13px;"><svg width="13" height="13" viewBox="0 0 14 14"><path d="M11.500 2.500h-3v6h-6v3h9z" fill="#9a9a9a"/><path d="M6.500 3.500q-3-0.500-3 2.500" stroke="#9a9a9a" stroke-width="0.900" fill="none"/></svg></div>
<div class="btn dis" style="left:580.12px;top:224px;width:13px;height:13px;"><svg width="13" height="13" viewBox="0 0 14 14"><path d="M3.500 2.500v9.500M7 2.500v9.500M10.500 2.500v9.500" stroke="#9a9a9a" stroke-width="1.300"/><path d="M3.500 7h7" stroke="#9a9a9a" stroke-width="0.800"/></svg></div>
<div class="btn dis" style="left:598.74px;top:224px;width:13px;height:13px;"><svg width="13" height="13" viewBox="0 0 14 14"><path d="M2.500 3.500h9.500M2.500 7h9.500M2.500 10.500h9.500" stroke="#9a9a9a" stroke-width="1.300"/><path d="M7 3.500v7" stroke="#9a9a9a" stroke-width="0.800"/></svg></div>
<div class="btn dis" style="left:617.36px;top:224px;width:13px;height:13px;"><svg width="13" height="13" viewBox="0 0 14 14"><rect x="3" y="3" width="3.500" height="3.500" fill="#9a9a9a"/><rect x="8" y="3" width="3.500" height="3.500" fill="#9a9a9a"/><rect x="3" y="8" width="3.500" height="3.500" fill="#9a9a9a"/><rect x="8" y="8" width="3.500" height="3.500" fill="#9a9a9a"/></svg></div>
<div class="btn dis" style="left:487.2px;top:242.7px;width:12.6px;height:11.4px;"><svg width="12.6" height="11.4" viewBox="0 0 14 14"><path d="M3 3h8.500" stroke="#9a9a9a" stroke-width="0.900"/><path d="M7.200 3.500v3.500M5.700 5.200L7.200 3.700L8.700 5.200" stroke="#9a9a9a" stroke-width="0.800" fill="none"/><rect x="3" y="8" width="8.500" height="3.500" fill="#9a9a9a"/></svg></div>
<div class="btn dis" style="left:487.2px;top:274.7px;width:12.6px;height:11.4px;"><svg width="12.6" height="11.4" viewBox="0 0 14 14"><path d="M3 11.500h8.500" stroke="#9a9a9a" stroke-width="0.900"/><path d="M7.200 11v-3.500M5.700 9.300L7.200 10.800L8.700 9.300" stroke="#9a9a9a" stroke-width="0.800" fill="none"/><rect x="3" y="3" width="8.500" height="3.500" fill="#9a9a9a"/></svg></div>
<div class="btn dis" style="left:468.4px;top:259.4px;width:12.6px;height:11.4px;"><svg width="12.6" height="11.4" viewBox="0 0 14 14"><path d="M3 3v8.500" stroke="#9a9a9a" stroke-width="0.900"/><path d="M3.500 7.200h3.500M5.200 5.700L3.700 7.200L5.200 8.700" stroke="#9a9a9a" stroke-width="0.800" fill="none"/><rect x="8" y="3" width="3.500" height="8.500" fill="#9a9a9a"/></svg></div>
<div class="btn dis" style="left:506.2px;top:259.4px;width:12.6px;height:11.4px;"><svg width="12.6" height="11.4" viewBox="0 0 14 14"><path d="M11.500 3v8.500" stroke="#9a9a9a" stroke-width="0.900"/><path d="M11 7.200h-3.500M9.300 5.700L10.800 7.200L9.300 8.700" stroke="#9a9a9a" stroke-width="0.800" fill="none"/><rect x="3" y="3" width="3.500" height="8.500" fill="#9a9a9a"/></svg></div>
<div class="btn dis" style="left:556.5px;top:242.7px;width:12.6px;height:11.4px;"><svg width="12.6" height="11.4" viewBox="0 0 14 14"><rect x="6" y="3" width="5.500" height="4" fill="#9a9a9a"/><rect x="3" y="7.500" width="5.500" height="4" fill="#9a9a9a"/><path d="M4 3.500v3M3 4.500l1-1l1 1" stroke="#9a9a9a" stroke-width="0.700" fill="none"/></svg></div>
<div class="btn dis" style="left:556.5px;top:274.7px;width:12.6px;height:11.4px;"><svg width="12.6" height="11.4" viewBox="0 0 14 14"><rect x="3" y="3" width="5.500" height="4" fill="#9a9a9a"/><rect x="6" y="7.500" width="5.500" height="4" fill="#9a9a9a"/><path d="M4 8v3M3 10l1 1l1-1" stroke="#9a9a9a" stroke-width="0.700" fill="none"/></svg></div>
<div class="btn dis" style="left:538px;top:259.4px;width:12.6px;height:11.4px;"><svg width="12.6" height="11.4" viewBox="0 0 14 14"><rect x="3" y="3" width="5.500" height="4" fill="#9a9a9a"/><rect x="6" y="7.500" width="5.500" height="4" fill="#9a9a9a"/><path d="M3 9.500h2.500M4 8.500l-1 1l1 1" stroke="#9a9a9a" stroke-width="0.700" fill="none"/></svg></div>
<div class="btn dis" style="left:575px;top:259.4px;width:12.6px;height:11.4px;"><svg width="12.6" height="11.4" viewBox="0 0 14 14"><rect x="3" y="3" width="5.500" height="4" fill="#9a9a9a"/><rect x="6" y="7.500" width="5.500" height="4" fill="#9a9a9a"/><path d="M9.500 5h2.500M11 4l1 1l-1 1" stroke="#9a9a9a" stroke-width="0.700" fill="none"/></svg></div>
<div class="grp" style="left:462px;top:306px;width:197.500px;height:229.800px;"></div>
<div class="a" style="left:465px;top:301.500px;width:31px;height:9px;background:#ece9d8;"></div>
<div class="t" style="top:301px;font-size:7.3px;transform:scaleX(0.942);transform-origin:left center;color:#2257d6;left:466.3px;">Remarks</div>
<div class="inp" style="left:464.300px;top:312.300px;width:193.300px;height:221.800px;border-color:#b9c6d2;"></div>
<div class="a" style="left:459.500px;top:538.500px;width:203px;height:1.700px;background:#fbfaf5;"></div>
<div class="a" style="left:662.300px;top:31px;width:3.400px;height:524px;background:#f4f2e8;"></div>
<div class="a" style="left:661.500px;top:54px;width:1px;height:486px;background:#fbfaf5;"></div>
<div class="a" style="left:4.9px;top:542px;width:61.1px;height:11px;box-sizing:border-box;border:1px solid #a5a294;border-top-color:#85837a;border-right-color:#fff;border-bottom-color:#fff;"></div>
<div class="a" style="left:70.6px;top:542px;width:411.4px;height:11px;box-sizing:border-box;border:1px solid #a5a294;border-top-color:#85837a;border-right-color:#fff;border-bottom-color:#fff;"></div>
<div class="a" style="left:484px;top:542px;width:21.5px;height:11px;box-sizing:border-box;border:1px solid #a5a294;border-top-color:#85837a;border-right-color:#fff;border-bottom-color:#fff;"></div>
<div class="a" style="left:507.5px;top:542px;width:26.5px;height:11px;box-sizing:border-box;border:1px solid #a5a294;border-top-color:#85837a;border-right-color:#fff;border-bottom-color:#fff;"></div>
<div class="a" style="left:535.2px;top:542px;width:61.799999999999955px;height:11px;box-sizing:border-box;border:1px solid #a5a294;border-top-color:#85837a;border-right-color:#fff;border-bottom-color:#fff;"></div>
<div class="a" style="left:599.8px;top:542px;width:63.200000000000045px;height:11px;box-sizing:border-box;border:1px solid #a5a294;border-top-color:#85837a;border-right-color:#fff;border-bottom-color:#fff;"></div>
<div class="t" style="top:543px;font-size:7.7px;right:166.0px;">1</div>
<div class="t" style="top:543px;font-size:7.7px;right:136.5px;">0/25</div>
<div class="t" style="top:543px;font-size:7.7px;transform:scaleX(0.897);transform-origin:left center;left:536.8px;">308.550935</div>
<div class="t" style="top:543px;font-size:7.7px;transform:scaleX(0.897);transform-origin:left center;left:601.5px;">572.752505</div>
</body></html>
